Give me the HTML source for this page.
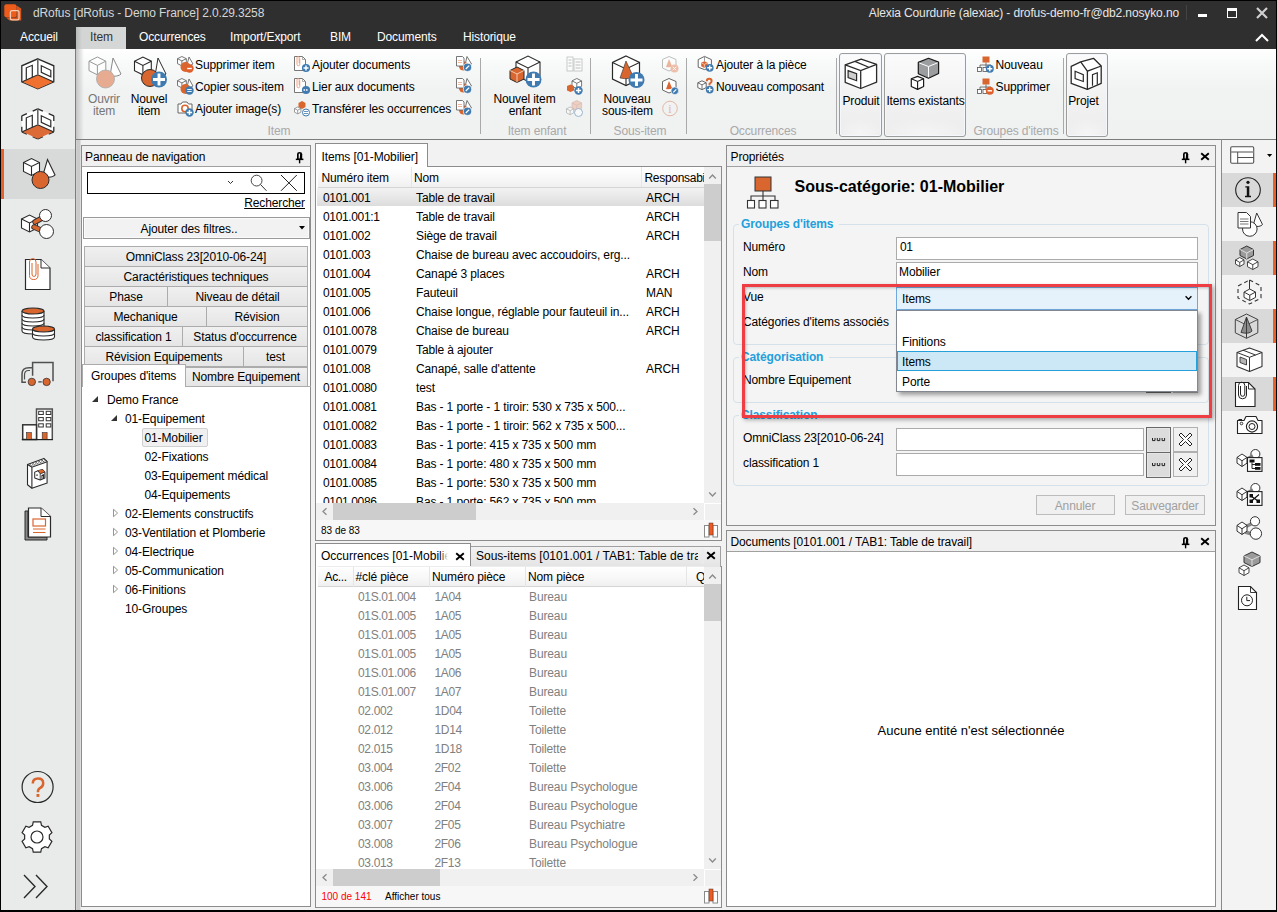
<!DOCTYPE html><html><head><meta charset="utf-8"><style>
html,body{margin:0;padding:0;}
body{width:1277px;height:912px;overflow:hidden;position:relative;background:#f2f2f2;font-family:"Liberation Sans",sans-serif;}
.t{position:absolute;white-space:nowrap;font-family:"Liberation Sans",sans-serif;}
.r{position:absolute;box-sizing:border-box;}
svg.r{overflow:visible}
</style></head><body>
<div class="r" style="left:0px;top:0px;width:1277px;height:49px;background:#2f2f2f"></div>
<div class="r" style="left:0px;top:0px;width:1277px;height:1px;background:#000"></div>
<svg class="r" style="left:0px;top:0px;" width="26" height="26" viewBox="0 0 26 26"><path d="M6 17.5H16.5V5.5L21.2 8.5V20.6H9.5Z" fill="#d8561c"/><rect x="4.3" y="4.3" width="12.2" height="13" rx="2" fill="#ee5c1c"/><rect x="10.4" y="10.6" width="8.6" height="9.2" rx="1.6" fill="none" stroke="#f6cdb4" stroke-width="1.3"/></svg>
<div class="t " style="left:33px;top:7.0px;font-size:12px;line-height:12px;color:#d6d6d6;font-weight:normal;letter-spacing:-0.12px;">dRofus [dRofus - Demo France] 2.0.29.3258</div>
<div class="t" style="right:98px;top:7.0px;font-size:12px;line-height:12px;color:#e6e6e6;font-weight:normal;letter-spacing:-0.12px;">Alexia Courdurie (alexiac) - drofus-demo-fr@db2.nosyko.no</div>
<div class="r" style="left:1186px;top:5px;width:1px;height:15px;background:#444"></div>
<div class="r" style="left:1198px;top:14px;width:9px;height:3px;background:#fff"></div>
<div class="r" style="left:1227px;top:8px;width:10px;height:10px;border:1px solid #fff;border-top-width:3px"></div>
<svg class="r" style="left:1256px;top:7px;" width="12" height="12" viewBox="0 0 12 12"><path d="M1 1L11 11M11 1L1 11" stroke="#cfcfcf" stroke-width="2.2"/></svg>
<div class="t " style="left:20px;top:31.0px;font-size:12px;line-height:12px;color:#fff;font-weight:normal;letter-spacing:-0.12px;">Accueil</div>
<div class="r" style="left:76px;top:27px;width:50px;height:22px;background:linear-gradient(90deg,#b9bbbb 0,#d3d5d5 6px,#d6d8d8 100%)"></div>
<div class="t " style="left:90px;top:31.0px;font-size:12px;line-height:12px;color:#333;font-weight:normal;letter-spacing:-0.12px;">Item</div>
<div class="t " style="left:139px;top:31.0px;font-size:12px;line-height:12px;color:#fff;font-weight:normal;letter-spacing:-0.12px;">Occurrences</div>
<div class="t " style="left:230px;top:31.0px;font-size:12px;line-height:12px;color:#fff;font-weight:normal;letter-spacing:-0.12px;">Import/Export</div>
<div class="t " style="left:330px;top:31.0px;font-size:12px;line-height:12px;color:#fff;font-weight:normal;letter-spacing:-0.12px;">BIM</div>
<div class="t " style="left:377px;top:31.0px;font-size:12px;line-height:12px;color:#fff;font-weight:normal;letter-spacing:-0.12px;">Documents</div>
<div class="t " style="left:463px;top:31.0px;font-size:12px;line-height:12px;color:#fff;font-weight:normal;letter-spacing:-0.12px;">Historique</div>
<svg class="r" style="left:1255px;top:33px;" width="14" height="9" viewBox="0 0 14 9"><path d="M1 8L7 2L13 8" stroke="#fff" stroke-width="2" fill="none"/></svg>
<!--BODY-->
<div class="r" style="left:1px;top:49px;width:74px;height:862px;background:#e9ebeb"></div>
<div class="r" style="left:75px;top:49px;width:1px;height:862px;background:#7c7c7c"></div>
<div class="r" style="left:1px;top:149px;width:74px;height:50px;background:#d8dada"></div>
<div class="r" style="left:1px;top:149px;width:3px;height:50px;background:#e8602c"></div>
<svg class="r" style="left:21px;top:57px;" width="35" height="33" viewBox="0 0 35 33"><g transform="translate(0.3,0.8)"><path d="M16.5 1L32.5 8V24L16.5 31L0.5 24V8Z" fill="#fff" stroke="#2a2a2a" stroke-width="1.3"/><path d="M16.5 17L32 24L16.5 31L1 24Z" fill="#f07030"/><path d="M1 24L16.5 17L32 24" fill="none" stroke="#2a2a2a" stroke-width="1.2"/><path d="M16.5 1V17" stroke="#666" stroke-width="1.6"/><path d="M5 22V10L11 7.5V19.5" fill="none" stroke="#2a2a2a" stroke-width="1.2"/><path d="M20 8L29.5 12.5V19L20 14.5Z" fill="none" stroke="#2a2a2a" stroke-width="1.2"/></g></svg>
<svg class="r" style="left:21px;top:107px;" width="35" height="33" viewBox="0 0 35 33"><g transform="translate(0.3,0.8)"><path d="M16.5 1L32.5 8V24L16.5 31L0.5 24V8Z" fill="#fff"/><path d="M16.5 1L21.62 3.24M27.38 5.76L32.5 8M32.5 8L32.50 13.12M32.50 18.88L32.5 24M32.5 24L27.38 26.24M21.62 28.76L16.5 31M16.5 31L11.38 28.76M5.62 26.24L0.5 24M0.5 24L0.50 18.88M0.50 13.12L0.5 8M0.5 8L5.62 5.76M11.38 3.24L16.5 1" fill="none" stroke="#2a2a2a" stroke-width="1.3"/><path d="M16.5 17L32 24L16.5 31L1 24Z" fill="#dc6a36"/><path d="M1 24L16.5 17L32 24" fill="none" stroke="#2a2a2a" stroke-width="1.2"/><path d="M16.5 1V17" stroke="#666" stroke-width="1.6"/><path d="M5 22V10L11 7.5V19.5" fill="none" stroke="#2a2a2a" stroke-width="1.2"/><path d="M20 8L29.5 12.5V19L20 14.5Z" fill="none" stroke="#2a2a2a" stroke-width="1.2"/></g></svg>
<svg class="r" style="left:22px;top:157px;" width="34" height="34" viewBox="0 0 34 34"><g transform="translate(1.5,1.5) scale(1.0)"><path d="M0 4L8 0L16 4V13L8 17L0 13Z" fill="#fff" stroke="#2a2a2a" stroke-width="1.1"/><path d="M0 4L8 8L16 4M8 8V17" fill="none" stroke="#2a2a2a" stroke-width="1.1"/></g><path d="M25.5 2.5L33 18Q30 21.5 20.5 19.5Z" fill="#fff" stroke="#2a2a2a" stroke-width="1.1"/><circle cx="18.5" cy="23" r="8.5" fill="#d9662f" stroke="#2a2a2a" stroke-width="1"/></svg>
<svg class="r" style="left:21px;top:207px;" width="34" height="30" viewBox="0 0 34 30"><g transform="translate(0.5,8) scale(1.0)"><path d="M0 4L8 0L16 4V13L8 17L0 13Z" fill="#fff" stroke="#2a2a2a" stroke-width="1.1"/><path d="M0 4L8 8L16 4M8 8V17" fill="none" stroke="#2a2a2a" stroke-width="1.1"/></g><path d="M14 15L23 10M13 20L22 24" stroke="#333" stroke-width="5.5" stroke-linecap="round"/><path d="M14 15L23 10M13 20L22 24" stroke="#d9662f" stroke-width="3.6" stroke-linecap="round"/><circle cx="24.5" cy="8.5" r="6" fill="#fff" stroke="#2a2a2a" stroke-width="1"/><circle cx="25.5" cy="24.5" r="7" fill="#fff" stroke="#2a2a2a" stroke-width="1"/></svg>
<svg class="r" style="left:24px;top:258px;" width="28" height="33" viewBox="0 0 28 33"><path d="M1.5 1.5H17L26 10V31.5H1.5Z" fill="#fff" stroke="#2a2a2a" stroke-width="1.2"/><path d="M17 1.5V10H26" fill="#fff" stroke="#2a2a2a" stroke-width="1"/><path d="M14 6V17.5Q14 21.5 9.75 21.5Q5.5 21.5 5.5 17.5V4Q5.5 0.5 8.75 0.5Q12 0.5 12 4V16Q12 18.5 9.75 18.5Q8 18.5 8 16V5" fill="none" stroke="#d9662f" stroke-width="1"/></svg>
<svg class="r" style="left:21px;top:307px;" width="34" height="34" viewBox="0 0 34 34"><path d="M1 20V24Q1 27 12 27Q23 27 23 24V20" fill="#fff" stroke="#2a2a2a" stroke-width="1.1"/><path d="M1 16V20Q1 23 12 23Q23 23 23 20V16" fill="#fff" stroke="#2a2a2a" stroke-width="1.1"/><path d="M1 12V16Q1 19 12 19Q23 19 23 16V12" fill="#fff" stroke="#2a2a2a" stroke-width="1.1"/><path d="M1 8V12Q1 15 12 15Q23 15 23 12V8" fill="#fff" stroke="#2a2a2a" stroke-width="1.1"/><path d="M1 4V8Q1 11 12 11Q23 11 23 8V4" fill="#fff" stroke="#2a2a2a" stroke-width="1.1"/><ellipse cx="12" cy="4" rx="11" ry="3" fill="#d9662f" stroke="#2a2a2a" stroke-width="1.1"/><path d="M11.5 26V30Q11.5 33 22.5 33Q33.5 33 33.5 30V26" fill="#fff" stroke="#2a2a2a" stroke-width="1.1"/><path d="M11.5 22V26Q11.5 29 22.5 29Q33.5 29 33.5 26V22" fill="#fff" stroke="#2a2a2a" stroke-width="1.1"/><ellipse cx="22.5" cy="22" rx="11" ry="3" fill="#d9662f" stroke="#2a2a2a" stroke-width="1.1"/></svg>
<svg class="r" style="left:0;top:0" width="76" height="912" viewBox="0 0 76 912"><path d="M32.6 375.7V362.4H53V381.2" fill="none" stroke="#505050" stroke-width="1.5"/><path d="M32.6 367.8H29Q22 367.8 22 374V382.2H26" fill="none" stroke="#505050" stroke-width="1.5"/><path d="M30 370.5H28.5Q24.5 370.5 24.5 375V379.5" fill="none" stroke="#505050" stroke-width="1.2"/><path d="M38.3 381.9H41.7" stroke="#333" stroke-width="1.2"/><circle cx="31.8" cy="381.9" r="3.7" fill="#d9662f" stroke="#333" stroke-width="0.8"/><circle cx="46.6" cy="381.9" r="3.7" fill="#d9662f" stroke="#333" stroke-width="0.8"/><path d="M36.5 439.5V409H52.3V439.5" fill="#fff" stroke="#505050" stroke-width="1.5"/><rect x="22.7" y="424.8" width="13.8" height="14.7" fill="#fff" stroke="#333" stroke-width="1.5"/><rect x="38.7" y="411.3" width="4.6" height="3.2" fill="#fff" stroke="#333" stroke-width="1"/><rect x="46.2" y="411.3" width="4.6" height="3.2" fill="#fff" stroke="#333" stroke-width="1"/><rect x="38.7" y="417.55" width="4.6" height="3.2" fill="#fff" stroke="#333" stroke-width="1"/><rect x="46.2" y="417.55" width="4.6" height="3.2" fill="#fff" stroke="#333" stroke-width="1"/><rect x="38.7" y="423.8" width="4.6" height="3.2" fill="#fff" stroke="#333" stroke-width="1"/><rect x="46.2" y="423.8" width="4.6" height="3.2" fill="#fff" stroke="#333" stroke-width="1"/><rect x="26.4" y="432.5" width="4.9" height="7" fill="#d9662f" stroke="#333" stroke-width="0.6"/><rect x="42.2" y="432.5" width="4.9" height="7" fill="#d9662f" stroke="#333" stroke-width="0.6"/><path d="M21.8 439.6H53" stroke="#222" stroke-width="1.2"/></svg>
<svg class="r" style="left:26px;top:457px;" width="23" height="33" viewBox="0 0 23 33"><path d="M1.5 7.5L17.9 1.4L21.2 4.7V26L5.9 31.2L1.5 27.7Z" fill="#fff" stroke="#2a2a2a" stroke-width="1.1" stroke-linejoin="round"/><path d="M1.5 7.5L5.9 10.2L21.2 4.7M5.9 10.2V31.2" fill="none" stroke="#2a2a2a" stroke-width="1.1"/><path d="M3 8.4L19 2.6M4.5 9.3L20.3 3.6" fill="none" stroke="#2a2a2a" stroke-width="0.8" stroke-dasharray="2 1.2"/><path d="M21.2 5V26" stroke="#777" stroke-width="1.2"/><g transform="translate(8.3,12) scale(0.34)"><path d="M1.2 26.4V9.3L10.7 4.9L23.5 1.3L31.2 9V26.4L17.4 32.4Z" fill="#fff" stroke="#2a2a2a" stroke-width="3" stroke-linejoin="round"/><path d="M10.7 4.9L23.5 1.3L31.2 9L17.4 14.1Z" fill="#d9662f"/><path d="M10.7 4.9L17.4 14.1L31.2 9M17.4 14.1V32.4" fill="none" stroke="#2a2a2a" stroke-width="2.5"/><rect x="6" y="16" width="4" height="4" fill="#2a2a2a"/><path d="M22.5 28.8V19L27.3 17V27.4" fill="none" stroke="#2a2a2a" stroke-width="3"/></g></svg>
<svg class="r" style="left:23px;top:507px;" width="29" height="34" viewBox="0 0 29 34"><path d="M2 4H5V30H24V33H2Z" fill="#888" stroke="#2a2a2a" stroke-width="1"/><path d="M5.5 1H18L27.5 9.5V30H5.5Z" fill="#fff" stroke="#2a2a2a" stroke-width="1.2"/><path d="M18 1V9.5H27.5" fill="#fff" stroke="#2a2a2a" stroke-width="1"/><rect x="10" y="12" width="12.5" height="7" fill="none" stroke="#d9662f" stroke-width="1.2"/><path d="M10 22H22.5M10 25.5H22.5" stroke="#d9662f" stroke-width="1"/></svg>
<svg class="r" style="left:21px;top:770px;" width="34" height="34" viewBox="0 0 34 34"><circle cx="16.6" cy="17" r="15.5" fill="none" stroke="#2a2a2a" stroke-width="1.2"/><path d="M11.8 13.6Q11.8 8.6 17 8.6Q22.2 8.6 22.2 13.3Q22.2 16.6 19 18.2Q16.9 19.3 16.9 22.2" fill="none" stroke="#d9662f" stroke-width="2.5"/><rect x="15.5" y="24" width="2.9" height="2.9" fill="#d9662f"/></svg>
<svg class="r" style="left:21px;top:821px;" width="33" height="33" viewBox="0 0 33 33"><polygon points="12.25,0.96 19.75,0.96 20.48,4.33 23.87,6.29 27.15,5.23 30.90,11.73 28.35,14.04 28.35,17.96 30.90,20.27 27.15,26.77 23.87,25.71 20.48,27.67 19.75,31.04 12.25,31.04 11.52,27.67 8.13,25.71 4.85,26.77 1.10,20.27 3.65,17.96 3.65,14.04 1.10,11.73 4.85,5.23 8.13,6.29 11.52,4.33" fill="#fff" stroke="#2a2a2a" stroke-width="1.2"/><circle cx="16" cy="16" r="6" fill="#fff" stroke="#2a2a2a" stroke-width="1.2"/></svg>
<svg class="r" style="left:23px;top:874px;" width="26" height="26" viewBox="0 0 26 26"><path d="M1 1L12 12.5L1 24M13 1L24 12.5L13 24" fill="none" stroke="#2a2a2a" stroke-width="1.4"/></svg>
<div class="r" style="left:76px;top:49px;width:1201px;height:90px;background:linear-gradient(180deg,#ffffff 0,#f8f9f9 15px,#f1f2f2 42px,#f0f1f1 90px)"></div>
<div class="r" style="left:76px;top:49px;width:8px;height:90px;background:linear-gradient(90deg,#c4c4c4 0,rgba(240,240,240,0) 8px)"></div>
<div class="r" style="left:76px;top:139px;width:1201px;height:1px;background:#7c7c7c"></div>
<div class="r" style="left:480px;top:58px;width:1px;height:76px;background:#a9a9a9"></div>
<div class="r" style="left:590px;top:58px;width:1px;height:76px;background:#a9a9a9"></div>
<div class="r" style="left:686px;top:58px;width:1px;height:76px;background:#a9a9a9"></div>
<div class="r" style="left:836px;top:58px;width:1px;height:76px;background:#a9a9a9"></div>
<div class="r" style="left:1063px;top:58px;width:1px;height:76px;background:#a9a9a9"></div>
<div class="t" style="left:179.0px;width:200px;text-align:center;top:125.0px;font-size:12px;line-height:12px;color:#a9a9a9;font-weight:normal;letter-spacing:-0.12px;">Item</div>
<div class="t" style="left:437.0px;width:200px;text-align:center;top:125.0px;font-size:12px;line-height:12px;color:#a9a9a9;font-weight:normal;letter-spacing:-0.12px;">Item enfant</div>
<div class="t" style="left:540.0px;width:200px;text-align:center;top:125.0px;font-size:12px;line-height:12px;color:#a9a9a9;font-weight:normal;letter-spacing:-0.12px;">Sous-item</div>
<div class="t" style="left:663.0px;width:200px;text-align:center;top:125.0px;font-size:12px;line-height:12px;color:#a9a9a9;font-weight:normal;letter-spacing:-0.12px;">Occurrences</div>
<div class="t" style="left:916.0px;width:200px;text-align:center;top:125.0px;font-size:12px;line-height:12px;color:#a9a9a9;font-weight:normal;letter-spacing:-0.12px;">Groupes d&#x27;items</div>
<svg class="r" style="left:88px;top:56px;" width="36" height="34" viewBox="0 0 36 34"><g opacity="0.75"><g transform="translate(1,1) scale(1.05)"><path d="M0 4L8 0L16 4V13L8 17L0 13Z" fill="#fff" stroke="#777" stroke-width="0.9523809523809523"/><path d="M0 4L8 8L16 4M8 8V17" fill="none" stroke="#777" stroke-width="0.9523809523809523"/></g></g><path d="M25 2L33 18Q30 21 22 20Z" fill="#fff" stroke="#888" stroke-width="1"/><circle cx="17.5" cy="23" r="9" fill="#e6ab90" stroke="#aaa" stroke-width="0.8"/></svg>
<div class="t" style="left:4.0px;width:200px;text-align:center;top:92.5px;font-size:12px;line-height:12px;color:#767676;font-weight:normal;letter-spacing:-0.12px;">Ouvrir</div>
<div class="t" style="left:4.0px;width:200px;text-align:center;top:105.0px;font-size:12px;line-height:12px;color:#767676;font-weight:normal;letter-spacing:-0.12px;">item</div>
<svg class="r" style="left:133px;top:56px;" width="36" height="34" viewBox="0 0 36 34"><g transform="translate(1.5,1) scale(1.05)"><path d="M0 4L8 0L16 4V13L8 17L0 13Z" fill="#fff" stroke="#2a2a2a" stroke-width="1.0476190476190477"/><path d="M0 4L8 8L16 4M8 8V17" fill="none" stroke="#2a2a2a" stroke-width="1.0476190476190477"/></g><path d="M25 2L33 18Q30 21 22 20Z" fill="#fff" stroke="#2a2a2a" stroke-width="1"/><circle cx="17" cy="22" r="8.5" fill="#d9662f" stroke="#2a2a2a" stroke-width="1"/><circle cx="26" cy="23.5" r="8" fill="#3f7bb0"/><path d="M20.0 23.5H32.0M26 17.5V29.5" stroke="#fff" stroke-width="2.88"/></svg>
<div class="t" style="left:49.0px;width:200px;text-align:center;top:92.5px;font-size:12px;line-height:12px;color:#000;font-weight:normal;letter-spacing:-0.12px;">Nouvel</div>
<div class="t" style="left:49.0px;width:200px;text-align:center;top:105.0px;font-size:12px;line-height:12px;color:#000;font-weight:normal;letter-spacing:-0.12px;">item</div>
<svg class="r" style="left:177px;top:56px;" width="17" height="17" viewBox="0 0 17 17"><g transform="translate(0.5,0.5) scale(0.55)"><path d="M0 4L8 0L16 4V13L8 17L0 13Z" fill="#fff" stroke="#555" stroke-width="1.4545454545454546"/><path d="M0 4L8 8L16 4M8 8V17" fill="none" stroke="#555" stroke-width="1.4545454545454546"/></g><path d="M12 1L16 8Q14 10 10 9Z" fill="#fff" stroke="#555" stroke-width="0.8"/><circle cx="8.5" cy="11" r="5" fill="#d9662f"/><circle cx="12.5" cy="12.5" r="4.2" fill="#e0602c"/><path d="M10.19 12.5H14.81" stroke="#fff" stroke-width="1.4"/></svg>
<svg class="r" style="left:177px;top:78px;" width="17" height="17" viewBox="0 0 17 17"><g transform="translate(0.5,0.5) scale(0.55)"><path d="M0 4L8 0L16 4V13L8 17L0 13Z" fill="#fff" stroke="#555" stroke-width="1.4545454545454546"/><path d="M0 4L8 8L16 4M8 8V17" fill="none" stroke="#555" stroke-width="1.4545454545454546"/></g><path d="M12 1L16 8Q14 10 10 9Z" fill="#fff" stroke="#555" stroke-width="0.8"/><circle cx="8.5" cy="11" r="5" fill="#d9662f"/><circle cx="12.5" cy="12.5" r="4.2" fill="#3f7bb0"/><path d="M10.3 11.5H14.7M10.3 13.5H14.7" stroke="#fff" stroke-width="0.9"/></svg>
<svg class="r" style="left:177px;top:100px;" width="17" height="17" viewBox="0 0 17 17"><path d="M1 4H4L5.5 2H10L11.5 4H15V13H1Z" fill="#fff" stroke="#666" stroke-width="1"/><circle cx="8" cy="8.5" r="3.2" fill="none" stroke="#d9662f" stroke-width="1.6"/><circle cx="12.5" cy="12.5" r="4.2" fill="#3f7bb0"/><path d="M9.896 12.5H15.104M12.5 9.896V15.104" stroke="#fff" stroke-width="1.512"/></svg>
<div class="t " style="left:195px;top:59.2px;font-size:12px;line-height:12px;color:#000;font-weight:normal;letter-spacing:-0.12px;">Supprimer item</div>
<div class="t " style="left:195px;top:81.2px;font-size:12px;line-height:12px;color:#000;font-weight:normal;letter-spacing:-0.12px;">Copier sous-item</div>
<div class="t " style="left:195px;top:102.7px;font-size:12px;line-height:12px;color:#000;font-weight:normal;letter-spacing:-0.12px;">Ajouter image(s)</div>
<svg class="r" style="left:294px;top:56px;" width="17" height="17" viewBox="0 0 17 17"><path d="M0.5 0.5H8.5L11.5 3.5V14.5H0.5Z" fill="#fff" stroke="#777" stroke-width="1"/><path d="M8.5 0.5V3.5H11.5" fill="none" stroke="#999" stroke-width="0.8"/><path d="M5.8 2.5V8.3Q5.8 9.8 4.4 9.8Q3 9.8 3 8.3V1.8Q3 0.6 4.2 0.6Q5.2 0.6 5.2 1.8V7" fill="none" stroke="#eb9a78" stroke-width="0.9"/><circle cx="12" cy="12" r="4.1" fill="#3f7bb0"/><path d="M9.458 12H14.542M12 9.458V14.542" stroke="#fff" stroke-width="1.4759999999999998"/></svg>
<svg class="r" style="left:294px;top:78px;" width="17" height="17" viewBox="0 0 17 17"><path d="M0.5 0.5H8.5L11.5 3.5V14.5H0.5Z" fill="#fff" stroke="#777" stroke-width="1"/><path d="M8.5 0.5V3.5H11.5" fill="none" stroke="#999" stroke-width="0.8"/><path d="M5.8 2.5V8.3Q5.8 9.8 4.4 9.8Q3 9.8 3 8.3V1.8Q3 0.6 4.2 0.6Q5.2 0.6 5.2 1.8V7" fill="none" stroke="#eb9a78" stroke-width="0.9"/><circle cx="12" cy="12" r="4.1" fill="#3f7bb0"/><path d="M9.5 12H14.5" stroke="#fff" stroke-width="1.5" stroke-dasharray="1.6 0.9"/></svg>
<svg class="r" style="left:294px;top:100px;" width="17" height="17" viewBox="0 0 17 17"><path d="M4.5 3L8 1L11.5 3V7L8 9L4.5 7Z" fill="#d9662f"/><g transform="translate(0.5,7) scale(0.4)"><path d="M0 4L8 0L16 4V13L8 17L0 13Z" fill="#fff" stroke="#777" stroke-width="1.7499999999999998"/><path d="M0 4L8 8L16 4M8 8V17" fill="none" stroke="#777" stroke-width="1.7499999999999998"/></g><rect x="8.5" y="9" width="7" height="7" rx="3.5" fill="#fff" stroke="#3f7bb0" stroke-width="1"/><path d="M10 11.5H14M14 13.5H10" stroke="#3f7bb0" stroke-width="0.8"/></svg>
<div class="t " style="left:312px;top:59.2px;font-size:12px;line-height:12px;color:#000;font-weight:normal;letter-spacing:-0.12px;">Ajouter documents</div>
<div class="t " style="left:312px;top:81.2px;font-size:12px;line-height:12px;color:#000;font-weight:normal;letter-spacing:-0.12px;">Lier aux documents</div>
<div class="t " style="left:312px;top:102.7px;font-size:12px;line-height:12px;color:#000;font-weight:normal;letter-spacing:-0.12px;">Transférer les occurrences</div>
<svg class="r" style="left:456px;top:56px;" width="17" height="17" viewBox="0 0 17 17"><path d="M11 0.5L15.5 8Q14 9.5 9 9Z" fill="#fff" stroke="#666" stroke-width="0.9"/><circle cx="7.5" cy="10" r="4.6" fill="#d9662f"/><path d="M0.5 0.5H6.5L8 2V10H0.5Z" fill="#fff" stroke="#666" stroke-width="0.9"/><path d="M2 4.5H6M2 6.5H6" stroke="#f0b8a0" stroke-width="1"/><circle cx="11.5" cy="11.3" r="4.1" fill="#3f7bb0" stroke="#fff" stroke-width="0.7"/><path d="M9.8 13L13.2 9.6" stroke="#fff" stroke-width="1.3"/></svg>
<svg class="r" style="left:456px;top:78px;" width="17" height="17" viewBox="0 0 17 17"><path d="M11 0.5L15.5 8Q14 9.5 9 9Z" fill="#fff" stroke="#666" stroke-width="0.9"/><circle cx="7.5" cy="10" r="4.6" fill="#d9662f"/><path d="M0.5 0.5H6.5L8 2V10H0.5Z" fill="#fff" stroke="#666" stroke-width="0.9"/><path d="M2 4.5H6M2 6.5H6" stroke="#f0b8a0" stroke-width="1"/><circle cx="11.5" cy="11.3" r="4.1" fill="#3f7bb0" stroke="#fff" stroke-width="0.7"/><path d="M9.8 13L13.2 9.6" stroke="#fff" stroke-width="1.3"/></svg>
<svg class="r" style="left:456px;top:100px;" width="17" height="17" viewBox="0 0 17 17"><path d="M11 0.5L15.5 8Q14 9.5 9 9Z" fill="#fff" stroke="#666" stroke-width="0.9"/><circle cx="7.5" cy="10" r="4.6" fill="#d9662f"/><path d="M0.5 0.5H6.5L8 2V10H0.5Z" fill="#fff" stroke="#666" stroke-width="0.9"/><path d="M2 4.5H6M2 6.5H6" stroke="#f0b8a0" stroke-width="1"/><circle cx="11.5" cy="11.3" r="4.1" fill="#3f7bb0" stroke="#fff" stroke-width="0.7"/><path d="M9.8 13L13.2 9.6" stroke="#fff" stroke-width="1.3"/></svg>
<svg class="r" style="left:509px;top:55px;" width="34" height="34" viewBox="0 0 34 34"><g transform="translate(7,1) scale(1.5)"><path d="M0 4L8 0L16 4V13L8 17L0 13Z" fill="#fff" stroke="#2a2a2a" stroke-width="0.7333333333333334"/><path d="M0 4L8 8L16 4M8 8V17" fill="none" stroke="#2a2a2a" stroke-width="0.7333333333333334"/></g><path d="M1 15.5L8 12L15 15.5V24L8 27.5L1 24Z" fill="#d9662f" stroke="#2a2a2a" stroke-width="1"/><path d="M1 15.5L8 19L15 15.5M8 19V27.5" fill="none" stroke="#f5d5c0" stroke-width="0.9"/><circle cx="24.5" cy="24.5" r="8" fill="#3f7bb0"/><path d="M18.5 24.5H30.5M24.5 18.5V30.5" stroke="#fff" stroke-width="2.88"/></svg>
<div class="t" style="left:424.5px;width:200px;text-align:center;top:92.5px;font-size:12px;line-height:12px;color:#000;font-weight:normal;letter-spacing:-0.12px;">Nouvel item</div>
<div class="t" style="left:425.0px;width:200px;text-align:center;top:105.0px;font-size:12px;line-height:12px;color:#000;font-weight:normal;letter-spacing:-0.12px;">enfant</div>
<svg class="r" style="left:566px;top:56px;" width="17" height="17" viewBox="0 0 17 17"><g opacity="0.45"><rect x="1" y="1" width="6" height="14" fill="#fff" stroke="#777" stroke-width="0.8"/><rect x="8" y="3" width="8" height="12" fill="#fff" stroke="#777" stroke-width="0.8"/><path d="M2.5 4H5.5M2.5 7H5.5M2.5 10H5.5M9.5 6H14.5M9.5 9H14.5M9.5 12H14.5" stroke="#555" stroke-width="0.8"/></g></svg>
<svg class="r" style="left:566px;top:78px;" width="17" height="17" viewBox="0 0 17 17"><g transform="translate(6,0.5) scale(0.6)"><path d="M0 4L8 0L16 4V13L8 17L0 13Z" fill="#fff" stroke="#555" stroke-width="1.3333333333333335"/><path d="M0 4L8 8L16 4M8 8V17" fill="none" stroke="#555" stroke-width="1.3333333333333335"/></g><path d="M1 8L4.5 6.5L8 8V12.5L4.5 14L1 12.5Z" fill="#d9662f"/><circle cx="12.5" cy="12.5" r="4.2" fill="#3f7bb0"/><path d="M9.896 12.5H15.104M12.5 9.896V15.104" stroke="#fff" stroke-width="1.512"/></svg>
<svg class="r" style="left:566px;top:100px;" width="17" height="17" viewBox="0 0 17 17"><g opacity="0.5"><g transform="translate(6,0.5) scale(0.6)"><path d="M0 4L8 0L16 4V13L8 17L0 13Z" fill="#e8b090" stroke="#c88" stroke-width="1.3333333333333335"/><path d="M0 4L8 8L16 4M8 8V17" fill="none" stroke="#c88" stroke-width="1.3333333333333335"/></g><g transform="translate(0.5,7) scale(0.45)"><path d="M0 4L8 0L16 4V13L8 17L0 13Z" fill="#fff" stroke="#777" stroke-width="1.777777777777778"/><path d="M0 4L8 8L16 4M8 8V17" fill="none" stroke="#777" stroke-width="1.777777777777778"/></g><circle cx="12.5" cy="12.5" r="4" fill="#fff" stroke="#3f7bb0" stroke-width="1"/></g></svg>
<svg class="r" style="left:612px;top:55px;" width="34" height="34" viewBox="0 0 34 34"><path d="M14 1L27.5 7.5V24L14 30.5L0.5 24V7.5Z" fill="#fff" stroke="#2a2a2a" stroke-width="1.2"/><path d="M0.5 7.5L14 14L27.5 7.5M14 14V30.5" fill="none" stroke="#2a2a2a" stroke-width="1.1"/><path d="M14 6L21 21Q18 25 8 23Z" fill="#d9662f" stroke="#333" stroke-width="0.6"/><circle cx="24.5" cy="25" r="8" fill="#3f7bb0"/><path d="M18.5 25H30.5M24.5 19.0V31.0" stroke="#fff" stroke-width="2.88"/></svg>
<div class="t" style="left:527.0px;width:200px;text-align:center;top:92.5px;font-size:12px;line-height:12px;color:#000;font-weight:normal;letter-spacing:-0.12px;">Nouveau</div>
<div class="t" style="left:527.5px;width:200px;text-align:center;top:105.0px;font-size:12px;line-height:12px;color:#000;font-weight:normal;letter-spacing:-0.12px;">sous-item</div>
<svg class="r" style="left:662px;top:56px;" width="17" height="17" viewBox="0 0 17 17"><g opacity="0.45"><path d="M7 0.5L14 3.5V12L7 15L0.5 12V3.5Z" fill="#fff" stroke="#666" stroke-width="0.9"/><path d="M7 3L10 10Q8.5 12 4 11Z" fill="#d9662f"/><circle cx="12.5" cy="12.5" r="4" fill="#e57a50"/><path d="M10.8 10.8L14.2 14.2M14.2 10.8L10.8 14.2" stroke="#fff" stroke-width="1"/></g></svg>
<svg class="r" style="left:662px;top:78px;" width="17" height="17" viewBox="0 0 17 17"><path d="M7 0.5L14 3.5V12L7 15L0.5 12V3.5Z" fill="#fff" stroke="#555" stroke-width="0.9"/><path d="M7 3L10 10Q8.5 12 4 11Z" fill="#d9662f"/><circle cx="12.8" cy="12.8" r="3.8" fill="#3f7bb0" stroke="#fff" stroke-width="0.6"/><path d="M11.3 14.3L14.3 11.3" stroke="#fff" stroke-width="1.2"/></svg>
<svg class="r" style="left:662px;top:100px;" width="17" height="17" viewBox="0 0 17 17"><circle cx="8" cy="8.5" r="7.3" fill="none" stroke="#e3b8a3" stroke-width="1"/><text x="8" y="13" text-anchor="middle" font-family="Liberation Serif" font-size="12" fill="#e3b8a3">i</text></svg>
<svg class="r" style="left:697px;top:56px;" width="17" height="17" viewBox="0 0 17 17"><path d="M7.5 0.4L14.4 3.6V11.2L7.5 13.6L1.2 11.2V3.6Z" fill="#fff" stroke="#555" stroke-width="0.9"/><path d="M7.5 1V5.5" stroke="#999" stroke-width="1"/><path d="M7.4 5.2L10.6 6.8V10.3L7.4 11.9L4.2 10.3V6.8Z" fill="#d9662f"/><path d="M4.4 6.9L7.4 8.4L10.4 6.9M7.4 8.4V11.7" fill="none" stroke="#f5d0bb" stroke-width="0.8"/><circle cx="12.7" cy="11.8" r="3.9" fill="#3f7bb0"/><path d="M10.282 11.8H15.117999999999999M12.7 9.382000000000001V14.218" stroke="#fff" stroke-width="1.404"/></svg>
<svg class="r" style="left:697px;top:78px;" width="17" height="17" viewBox="0 0 17 17"><path d="M5 2.8L9.2 4.8V9.6L5 11.6L0.8 9.6V4.8Z" fill="#fff" stroke="#555" stroke-width="0.9"/><path d="M0.8 4.8L5 6.8L9.2 4.8M5 6.8V11.6" fill="none" stroke="#555" stroke-width="0.8"/><path d="M9.8 3.2Q9.8 0.8 12.2 0.8Q14.6 0.8 14.6 3Q14.6 4.8 12.6 5.6V7.2" fill="none" stroke="#d9662f" stroke-width="2"/><circle cx="12.7" cy="11.6" r="3.9" fill="#3f7bb0"/><path d="M10.282 11.6H15.117999999999999M12.7 9.181999999999999V14.018" stroke="#fff" stroke-width="1.404"/></svg>
<div class="t " style="left:716px;top:59.2px;font-size:12px;line-height:12px;color:#000;font-weight:normal;letter-spacing:-0.12px;">Ajouter à la pièce</div>
<div class="t " style="left:716px;top:81.2px;font-size:12px;line-height:12px;color:#000;font-weight:normal;letter-spacing:-0.12px;">Nouveau composant</div>
<div class="r" style="left:839px;top:53px;width:43px;height:84px;border:1px solid #9c9c9c;border-radius:3px;box-shadow:inset 0 0 0 1px #f4f8fc;background:radial-gradient(ellipse 60% 22% at 50% 100%,#f6f6f6 0,rgba(246,246,246,0) 100%),linear-gradient(180deg,#fbfbfb 0,#f3f3f3 45%,#ececec 100%)"></div>
<div class="r" style="left:884px;top:53px;width:82px;height:84px;border:1px solid #9c9c9c;border-radius:3px;box-shadow:inset 0 0 0 1px #f4f8fc;background:radial-gradient(ellipse 60% 22% at 50% 100%,#f6f6f6 0,rgba(246,246,246,0) 100%),linear-gradient(180deg,#fbfbfb 0,#f3f3f3 45%,#ececec 100%)"></div>
<div class="r" style="left:1066px;top:53px;width:42px;height:84px;border:1px solid #9c9c9c;border-radius:3px;box-shadow:inset 0 0 0 1px #f4f8fc;background:radial-gradient(ellipse 60% 22% at 50% 100%,#f6f6f6 0,rgba(246,246,246,0) 100%),linear-gradient(180deg,#fbfbfb 0,#f3f3f3 45%,#ececec 100%)"></div>
<svg class="r" style="left:844px;top:58px;" width="34" height="32" viewBox="0 0 34 32"><path d="M17.2 1.2L32.6 6.3V24.2L16.7 30.5L1.2 24.4V6.8Z" fill="#fff" stroke="#2a2a2a" stroke-width="1.3" stroke-linejoin="round"/><path d="M1.2 6.8L16.7 12.6L32.6 6.3M16.7 12.6V30.5M10.9 3.4L25.4 9.5" fill="none" stroke="#2a2a2a" stroke-width="1.3"/><path d="M4.1 12.6L12.6 15.7V22.7L4.1 19.6Z" fill="#cfcfcf" stroke="#2a2a2a" stroke-width="1.2"/></svg>
<div class="t" style="left:761.0px;width:200px;text-align:center;top:95.2px;font-size:12px;line-height:12px;color:#000;font-weight:normal;letter-spacing:-0.12px;">Produit</div>
<svg class="r" style="left:900px;top:52px;" width="50" height="44" viewBox="0 0 50 44"><path d="M28.5 6.3L38.6 10.1V21.5L28.5 26.3L18.3 21.7V10.4Z" fill="#9b9d9e" stroke="#1a1a1a" stroke-width="1.2" stroke-linejoin="round"/><path d="M19.3 11L28.5 14.5L37.6 10.8M28.5 14.5V25.3" fill="none" stroke="#fff" stroke-width="1"/><path d="M17.6 24.4L23.6 26.8V34.5L17.6 37.4L11.3 34.5V26.8Z" fill="#fff" stroke="#1a1a1a" stroke-width="1.2" stroke-linejoin="round"/><path d="M11.3 26.8L17.6 29.4L23.6 26.8M17.6 29.4V37.4" fill="none" stroke="#1a1a1a" stroke-width="1.1"/></svg>
<div class="t" style="left:825.5px;width:200px;text-align:center;top:95.2px;font-size:12px;line-height:12px;color:#000;font-weight:normal;letter-spacing:-0.12px;">Items existants</div>
<svg class="r" style="left:977px;top:56px;" width="17" height="17" viewBox="0 0 17 17"><rect x="5.5" y="0.5" width="7" height="6" fill="#d9662f"/><path d="M9 6.5V9M3 12V9H14V12M9 9V12" fill="none" stroke="#555" stroke-width="0.8"/><rect x="0.5" y="11.5" width="4" height="4" fill="#fff" stroke="#555" stroke-width="0.8"/><rect x="6" y="11.5" width="4" height="4" fill="#fff" stroke="#555" stroke-width="0.8"/><circle cx="12.8" cy="12.8" r="4" fill="#3f7bb0"/><path d="M10.32 12.8H15.280000000000001M12.8 10.32V15.280000000000001" stroke="#fff" stroke-width="1.44"/></svg>
<svg class="r" style="left:977px;top:78px;" width="17" height="17" viewBox="0 0 17 17"><rect x="5.5" y="0.5" width="7" height="6" fill="#d9662f"/><path d="M9 6.5V9M3 12V9H14V12M9 9V12" fill="none" stroke="#555" stroke-width="0.8"/><rect x="0.5" y="11.5" width="4" height="4" fill="#fff" stroke="#555" stroke-width="0.8"/><rect x="6" y="11.5" width="4" height="4" fill="#fff" stroke="#555" stroke-width="0.8"/><circle cx="12.8" cy="12.8" r="4" fill="#e0602c"/><path d="M10.600000000000001 12.8H15.0" stroke="#fff" stroke-width="1.4"/></svg>
<div class="t " style="left:995.5px;top:59.2px;font-size:12px;line-height:12px;color:#000;font-weight:normal;letter-spacing:-0.12px;">Nouveau</div>
<div class="t " style="left:995.5px;top:81.2px;font-size:12px;line-height:12px;color:#000;font-weight:normal;letter-spacing:-0.12px;">Supprimer</div>
<svg class="r" style="left:1070px;top:57px;" width="34" height="34" viewBox="0 0 34 34"><path d="M1.2 26.4V9.3L10.7 4.9L23.5 1.3L31.2 9V26.4L17.4 32.4Z" fill="#fff" stroke="#2a2a2a" stroke-width="1.3" stroke-linejoin="round"/><path d="M10.7 4.9L17.4 14.1L31.2 9M17.4 14.1V32.4" fill="none" stroke="#2a2a2a" stroke-width="1.3"/><path d="M5.1 14.3L13.3 17.7V24.5L5.1 21.6Z" fill="none" stroke="#2a2a2a" stroke-width="1.2"/><path d="M22.5 28.8V17.7L27.3 15.8V27.4" fill="none" stroke="#2a2a2a" stroke-width="1.2"/></svg>
<div class="t" style="left:983.5px;width:200px;text-align:center;top:95.2px;font-size:12px;line-height:12px;color:#000;font-weight:normal;letter-spacing:-0.12px;">Projet</div>
<div class="r" style="left:76px;top:140px;width:5px;height:771px;background:linear-gradient(90deg,#d4d4d4 0,#c9c9c9 1.5px,#cbcbcb 3.5px,#e6e6e6 5px)"></div>
<div class="r" style="left:81px;top:145px;width:230px;height:762px;background:#fff;border:1px solid #8c8c8c"></div>
<div class="r" style="left:82px;top:146px;width:228px;height:21px;background:#f0f0f0;border-bottom:1px solid #a0a0a0"></div>
<div class="t " style="left:85px;top:150.5px;font-size:12px;line-height:12px;color:#000;font-weight:normal;letter-spacing:-0.12px;">Panneau de navigation</div>
<svg class="r" style="left:295px;top:151px;" width="10" height="13" viewBox="0 0 10 13"><path d="M2 8.2V3.2Q2 1 4.6 1Q7.2 1 7.2 3.2V8.2Z" fill="#000"/><path d="M3.7 7.8V3.2Q3.7 2.4 4.7 2.4Q5.4 2.4 5.1 3.2L4.7 7.8Z" fill="#f0f0f0"/><rect x="0.8" y="7.6" width="7.6" height="1.5" fill="#000"/><rect x="3.9" y="8.5" width="1.4" height="3.8" fill="#000"/></svg>
<div class="r" style="left:87px;top:172px;width:218px;height:22px;border:1px solid #000;background:#fff"></div>
<svg class="r" style="left:226px;top:180px;" width="9" height="6" viewBox="0 0 9 6"><path d="M2 1L4.5 3.5L7 1" fill="none" stroke="#333" stroke-width="1"/></svg>
<svg class="r" style="left:250px;top:173px;" width="18" height="19" viewBox="0 0 18 19"><circle cx="6.6" cy="7.6" r="5.4" fill="none" stroke="#444" stroke-width="1"/><path d="M10.5 11.5L16.5 17.8" stroke="#333" stroke-width="1"/></svg>
<svg class="r" style="left:280px;top:174px;" width="18" height="18" viewBox="0 0 18 18"><path d="M1 1L16.8 16.8M16.8 1L1 16.8" stroke="#222" stroke-width="1"/></svg>
<div class="t" style="right:972px;top:197.0px;font-size:12px;line-height:12px;color:#000;font-weight:normal;letter-spacing:-0.12px;text-decoration:underline;">Rechercher</div>
<div class="r" style="left:83px;top:217px;width:227px;height:22px;border:1px solid #9a9a9a;background:#f2f2f2;box-shadow:inset 0 0 0 1px #fbfbfb"></div>
<div class="t" style="left:89.0px;width:200px;text-align:center;top:222.5px;font-size:12px;line-height:12px;color:#000;font-weight:normal;letter-spacing:-0.12px;">Ajouter des filtres..</div>
<svg class="r" style="left:299px;top:226px;" width="6" height="4" viewBox="0 0 6 4"><path d="M0 0H6L3 3.5Z" fill="#000"/></svg>
<div class="r" style="left:84px;top:246px;width:224px;height:21px;border:1px solid #acacac;background:linear-gradient(180deg,#f0f0f0 0,#e5e5e5 100%)"></div>
<div class="t" style="left:96.0px;width:200px;text-align:center;top:250.5px;font-size:12px;line-height:12px;color:#000;font-weight:normal;letter-spacing:-0.12px;">OmniClass 23[2010-06-24]</div>
<div class="r" style="left:84px;top:266px;width:224px;height:21px;border:1px solid #acacac;background:linear-gradient(180deg,#f0f0f0 0,#e5e5e5 100%)"></div>
<div class="t" style="left:96.0px;width:200px;text-align:center;top:270.5px;font-size:12px;line-height:12px;color:#000;font-weight:normal;letter-spacing:-0.12px;">Caractéristiques techniques</div>
<div class="r" style="left:84px;top:286px;width:84px;height:21px;border:1px solid #acacac;background:linear-gradient(180deg,#f0f0f0 0,#e5e5e5 100%)"></div>
<div class="t" style="left:26.0px;width:200px;text-align:center;top:290.5px;font-size:12px;line-height:12px;color:#000;font-weight:normal;letter-spacing:-0.12px;">Phase</div>
<div class="r" style="left:167px;top:286px;width:141px;height:21px;border:1px solid #acacac;background:linear-gradient(180deg,#f0f0f0 0,#e5e5e5 100%)"></div>
<div class="t" style="left:137.5px;width:200px;text-align:center;top:290.5px;font-size:12px;line-height:12px;color:#000;font-weight:normal;letter-spacing:-0.12px;">Niveau de détail</div>
<div class="r" style="left:84px;top:306px;width:123px;height:21px;border:1px solid #acacac;background:linear-gradient(180deg,#f0f0f0 0,#e5e5e5 100%)"></div>
<div class="t" style="left:45.5px;width:200px;text-align:center;top:310.5px;font-size:12px;line-height:12px;color:#000;font-weight:normal;letter-spacing:-0.12px;">Mechanique</div>
<div class="r" style="left:206px;top:306px;width:102px;height:21px;border:1px solid #acacac;background:linear-gradient(180deg,#f0f0f0 0,#e5e5e5 100%)"></div>
<div class="t" style="left:157.0px;width:200px;text-align:center;top:310.5px;font-size:12px;line-height:12px;color:#000;font-weight:normal;letter-spacing:-0.12px;">Révision</div>
<div class="r" style="left:84px;top:326px;width:99px;height:21px;border:1px solid #acacac;background:linear-gradient(180deg,#f0f0f0 0,#e5e5e5 100%)"></div>
<div class="t" style="left:33.5px;width:200px;text-align:center;top:330.5px;font-size:12px;line-height:12px;color:#000;font-weight:normal;letter-spacing:-0.12px;">classification 1</div>
<div class="r" style="left:182px;top:326px;width:126px;height:21px;border:1px solid #acacac;background:linear-gradient(180deg,#f0f0f0 0,#e5e5e5 100%)"></div>
<div class="t" style="left:145.0px;width:200px;text-align:center;top:330.5px;font-size:12px;line-height:12px;color:#000;font-weight:normal;letter-spacing:-0.12px;">Status d&#x27;occurrence</div>
<div class="r" style="left:84px;top:346px;width:160px;height:21px;border:1px solid #acacac;background:linear-gradient(180deg,#f0f0f0 0,#e5e5e5 100%)"></div>
<div class="t" style="left:64.0px;width:200px;text-align:center;top:350.5px;font-size:12px;line-height:12px;color:#000;font-weight:normal;letter-spacing:-0.12px;">Révision Equipements</div>
<div class="r" style="left:243px;top:346px;width:65px;height:21px;border:1px solid #acacac;background:linear-gradient(180deg,#f0f0f0 0,#e5e5e5 100%)"></div>
<div class="t" style="left:175.5px;width:200px;text-align:center;top:350.5px;font-size:12px;line-height:12px;color:#000;font-weight:normal;letter-spacing:-0.12px;">test</div>
<div class="r" style="left:185px;top:367px;width:123px;height:20px;border:1px solid #acacac;background:linear-gradient(180deg,#f0f0f0 0,#e5e5e5 100%)"></div>
<div class="t" style="left:146.0px;width:200px;text-align:center;top:371.0px;font-size:12px;line-height:12px;color:#000;font-weight:normal;letter-spacing:-0.12px;">Nombre Equipement</div>
<div class="r" style="left:82px;top:364px;width:104px;height:23px;background:#fff;border:1px solid #acacac;border-bottom:none"></div>
<div class="t " style="left:91px;top:370.0px;font-size:12px;line-height:12px;color:#000;font-weight:normal;letter-spacing:-0.12px;">Groupes d&#x27;items</div>
<div class="r" style="left:82px;top:386px;width:229px;height:1px;background:#acacac"></div>
<div class="r" style="left:83px;top:386px;width:102px;height:1px;background:#fff"></div>
<svg class="r" style="left:91px;top:395px;" width="8" height="8" viewBox="0 0 8 8"><path d="M7 1V7H1Z" fill="#333"/></svg>
<div class="t " style="left:107px;top:393.5px;font-size:12px;line-height:12px;color:#000;font-weight:normal;letter-spacing:-0.12px;">Demo France</div>
<svg class="r" style="left:110px;top:414px;" width="8" height="8" viewBox="0 0 8 8"><path d="M7 1V7H1Z" fill="#333"/></svg>
<div class="t " style="left:125px;top:412.5px;font-size:12px;line-height:12px;color:#000;font-weight:normal;letter-spacing:-0.12px;">01-Equipement</div>
<div class="r" style="left:142px;top:428px;width:66px;height:19px;background:#f0f0f0;border:1px solid #d0d0d0;border-radius:2px"></div>
<div class="t " style="left:144.5px;top:431.5px;font-size:12px;line-height:12px;color:#000;font-weight:normal;letter-spacing:-0.12px;">01-Mobilier</div>
<div class="t " style="left:144.5px;top:450.5px;font-size:12px;line-height:12px;color:#000;font-weight:normal;letter-spacing:-0.12px;">02-Fixations</div>
<div class="t " style="left:144.5px;top:469.5px;font-size:12px;line-height:12px;color:#000;font-weight:normal;letter-spacing:-0.12px;">03-Equipement médical</div>
<div class="t " style="left:144.5px;top:488.5px;font-size:12px;line-height:12px;color:#000;font-weight:normal;letter-spacing:-0.12px;">04-Equipements</div>
<svg class="r" style="left:112px;top:508.0px;" width="8" height="10" viewBox="0 0 8 10"><path d="M1.5 1.3L5.6 5L1.5 8.7Z" fill="#fff" stroke="#8a8a8a" stroke-width="0.9"/></svg>
<div class="t " style="left:125px;top:507.5px;font-size:12px;line-height:12px;color:#000;font-weight:normal;letter-spacing:-0.12px;">02-Elements constructifs</div>
<svg class="r" style="left:112px;top:527.0px;" width="8" height="10" viewBox="0 0 8 10"><path d="M1.5 1.3L5.6 5L1.5 8.7Z" fill="#fff" stroke="#8a8a8a" stroke-width="0.9"/></svg>
<div class="t " style="left:125px;top:526.5px;font-size:12px;line-height:12px;color:#000;font-weight:normal;letter-spacing:-0.12px;">03-Ventilation et Plomberie</div>
<svg class="r" style="left:112px;top:546.0px;" width="8" height="10" viewBox="0 0 8 10"><path d="M1.5 1.3L5.6 5L1.5 8.7Z" fill="#fff" stroke="#8a8a8a" stroke-width="0.9"/></svg>
<div class="t " style="left:125px;top:545.5px;font-size:12px;line-height:12px;color:#000;font-weight:normal;letter-spacing:-0.12px;">04-Electrique</div>
<svg class="r" style="left:112px;top:565.0px;" width="8" height="10" viewBox="0 0 8 10"><path d="M1.5 1.3L5.6 5L1.5 8.7Z" fill="#fff" stroke="#8a8a8a" stroke-width="0.9"/></svg>
<div class="t " style="left:125px;top:564.5px;font-size:12px;line-height:12px;color:#000;font-weight:normal;letter-spacing:-0.12px;">05-Communication</div>
<svg class="r" style="left:112px;top:584.0px;" width="8" height="10" viewBox="0 0 8 10"><path d="M1.5 1.3L5.6 5L1.5 8.7Z" fill="#fff" stroke="#8a8a8a" stroke-width="0.9"/></svg>
<div class="t " style="left:125px;top:583.5px;font-size:12px;line-height:12px;color:#000;font-weight:normal;letter-spacing:-0.12px;">06-Finitions</div>
<div class="t " style="left:125px;top:602.5px;font-size:12px;line-height:12px;color:#000;font-weight:normal;letter-spacing:-0.12px;">10-Groupes</div>
<div class="r" style="left:315px;top:166px;width:407px;height:375px;background:#fff;border:1px solid #8c8c8c"></div>
<div class="r" style="left:315px;top:143px;width:113px;height:24px;background:#fff;border:1px solid #8c8c8c;border-bottom:none"></div>
<div class="t " style="left:321.5px;top:151.0px;font-size:12px;line-height:12px;color:#000;font-weight:normal;letter-spacing:-0.12px;">Items [01-Mobilier]</div>
<div class="r" style="left:318px;top:167px;width:386px;height:21px;background:linear-gradient(180deg,#ffffff 0,#f7f7f7 60%,#f0f0f0 100%);border-bottom:1px solid #d5d5d5"></div>
<div class="r" style="left:411px;top:167px;width:1px;height:20px;background:#e5e5e5"></div>
<div class="r" style="left:641px;top:167px;width:1px;height:20px;background:#e5e5e5"></div>
<div class="t " style="left:321.5px;top:172.0px;font-size:12px;line-height:12px;color:#000;font-weight:normal;letter-spacing:-0.12px;">Numéro item</div>
<div class="t " style="left:414px;top:172.0px;font-size:12px;line-height:12px;color:#000;font-weight:normal;letter-spacing:-0.12px;">Nom</div>
<div class="r" style="left:644px;top:167px;width:60px;height:20px;overflow:hidden"><div class="t" style="left:0.5px;top:5px;font-size:12px;line-height:12px;letter-spacing:-0.3px">Responsabilité</div></div>
<div class="r" style="left:316px;top:188px;width:388px;height:315px;overflow:hidden">
<div class="r" style="left:1px;top:0px;width:387px;height:18px;background:linear-gradient(180deg,#f2f2f2 0,#e8e8e8 50%,#dcdcdc 100%)"></div>
<div class="t " style="left:7px;top:3.5px;font-size:12px;line-height:12px;color:#000;font-weight:normal;letter-spacing:-0.35px;">0101.001</div>
<div class="t " style="left:100px;top:3.5px;font-size:12px;line-height:12px;color:#000;font-weight:normal;letter-spacing:-0.12px;">Table de travail</div>
<div class="t " style="left:330px;top:3.5px;font-size:12px;line-height:12px;color:#000;font-weight:normal;letter-spacing:-0.12px;">ARCH</div>
<div class="t " style="left:7px;top:22.5px;font-size:12px;line-height:12px;color:#000;font-weight:normal;letter-spacing:-0.35px;">0101.001:1</div>
<div class="t " style="left:100px;top:22.5px;font-size:12px;line-height:12px;color:#000;font-weight:normal;letter-spacing:-0.12px;">Table de travail</div>
<div class="t " style="left:330px;top:22.5px;font-size:12px;line-height:12px;color:#000;font-weight:normal;letter-spacing:-0.12px;">ARCH</div>
<div class="t " style="left:7px;top:41.5px;font-size:12px;line-height:12px;color:#000;font-weight:normal;letter-spacing:-0.35px;">0101.002</div>
<div class="t " style="left:100px;top:41.5px;font-size:12px;line-height:12px;color:#000;font-weight:normal;letter-spacing:-0.12px;">Siège de travail</div>
<div class="t " style="left:330px;top:41.5px;font-size:12px;line-height:12px;color:#000;font-weight:normal;letter-spacing:-0.12px;">ARCH</div>
<div class="t " style="left:7px;top:60.5px;font-size:12px;line-height:12px;color:#000;font-weight:normal;letter-spacing:-0.35px;">0101.003</div>
<div class="t " style="left:100px;top:60.5px;font-size:12px;line-height:12px;color:#000;font-weight:normal;letter-spacing:-0.12px;">Chaise de bureau avec accoudoirs, erg...</div>
<div class="t " style="left:7px;top:79.5px;font-size:12px;line-height:12px;color:#000;font-weight:normal;letter-spacing:-0.35px;">0101.004</div>
<div class="t " style="left:100px;top:79.5px;font-size:12px;line-height:12px;color:#000;font-weight:normal;letter-spacing:-0.12px;">Canapé 3 places</div>
<div class="t " style="left:330px;top:79.5px;font-size:12px;line-height:12px;color:#000;font-weight:normal;letter-spacing:-0.12px;">ARCH</div>
<div class="t " style="left:7px;top:98.5px;font-size:12px;line-height:12px;color:#000;font-weight:normal;letter-spacing:-0.35px;">0101.005</div>
<div class="t " style="left:100px;top:98.5px;font-size:12px;line-height:12px;color:#000;font-weight:normal;letter-spacing:-0.12px;">Fauteuil</div>
<div class="t " style="left:330px;top:98.5px;font-size:12px;line-height:12px;color:#000;font-weight:normal;letter-spacing:-0.12px;">MAN</div>
<div class="t " style="left:7px;top:117.5px;font-size:12px;line-height:12px;color:#000;font-weight:normal;letter-spacing:-0.35px;">0101.006</div>
<div class="t " style="left:100px;top:117.5px;font-size:12px;line-height:12px;color:#000;font-weight:normal;letter-spacing:-0.12px;">Chaise longue, réglable pour fauteuil in...</div>
<div class="t " style="left:330px;top:117.5px;font-size:12px;line-height:12px;color:#000;font-weight:normal;letter-spacing:-0.12px;">ARCH</div>
<div class="t " style="left:7px;top:136.5px;font-size:12px;line-height:12px;color:#000;font-weight:normal;letter-spacing:-0.35px;">0101.0078</div>
<div class="t " style="left:100px;top:136.5px;font-size:12px;line-height:12px;color:#000;font-weight:normal;letter-spacing:-0.12px;">Chaise de bureau</div>
<div class="t " style="left:330px;top:136.5px;font-size:12px;line-height:12px;color:#000;font-weight:normal;letter-spacing:-0.12px;">ARCH</div>
<div class="t " style="left:7px;top:155.5px;font-size:12px;line-height:12px;color:#000;font-weight:normal;letter-spacing:-0.35px;">0101.0079</div>
<div class="t " style="left:100px;top:155.5px;font-size:12px;line-height:12px;color:#000;font-weight:normal;letter-spacing:-0.12px;">Table à ajouter</div>
<div class="t " style="left:7px;top:174.5px;font-size:12px;line-height:12px;color:#000;font-weight:normal;letter-spacing:-0.35px;">0101.008</div>
<div class="t " style="left:100px;top:174.5px;font-size:12px;line-height:12px;color:#000;font-weight:normal;letter-spacing:-0.12px;">Canapé, salle d&#x27;attente</div>
<div class="t " style="left:330px;top:174.5px;font-size:12px;line-height:12px;color:#000;font-weight:normal;letter-spacing:-0.12px;">ARCH</div>
<div class="t " style="left:7px;top:193.5px;font-size:12px;line-height:12px;color:#000;font-weight:normal;letter-spacing:-0.35px;">0101.0080</div>
<div class="t " style="left:100px;top:193.5px;font-size:12px;line-height:12px;color:#000;font-weight:normal;letter-spacing:-0.12px;">test</div>
<div class="t " style="left:7px;top:212.5px;font-size:12px;line-height:12px;color:#000;font-weight:normal;letter-spacing:-0.35px;">0101.0081</div>
<div class="t " style="left:100px;top:212.5px;font-size:12px;line-height:12px;color:#000;font-weight:normal;letter-spacing:-0.12px;">Bas - 1 porte - 1 tiroir: 530 x 735 x 500...</div>
<div class="t " style="left:7px;top:231.5px;font-size:12px;line-height:12px;color:#000;font-weight:normal;letter-spacing:-0.35px;">0101.0082</div>
<div class="t " style="left:100px;top:231.5px;font-size:12px;line-height:12px;color:#000;font-weight:normal;letter-spacing:-0.12px;">Bas - 1 porte - 1 tiroir: 562 x 735 x 500...</div>
<div class="t " style="left:7px;top:250.5px;font-size:12px;line-height:12px;color:#000;font-weight:normal;letter-spacing:-0.35px;">0101.0083</div>
<div class="t " style="left:100px;top:250.5px;font-size:12px;line-height:12px;color:#000;font-weight:normal;letter-spacing:-0.12px;">Bas - 1 porte: 415 x 735 x 500 mm</div>
<div class="t " style="left:7px;top:269.5px;font-size:12px;line-height:12px;color:#000;font-weight:normal;letter-spacing:-0.35px;">0101.0084</div>
<div class="t " style="left:100px;top:269.5px;font-size:12px;line-height:12px;color:#000;font-weight:normal;letter-spacing:-0.12px;">Bas - 1 porte: 480 x 735 x 500 mm</div>
<div class="t " style="left:7px;top:288.5px;font-size:12px;line-height:12px;color:#000;font-weight:normal;letter-spacing:-0.35px;">0101.0085</div>
<div class="t " style="left:100px;top:288.5px;font-size:12px;line-height:12px;color:#000;font-weight:normal;letter-spacing:-0.12px;">Bas - 1 porte: 530 x 735 x 500 mm</div>
<div class="t " style="left:7px;top:307.5px;font-size:12px;line-height:12px;color:#000;font-weight:normal;letter-spacing:-0.35px;">0101.0086</div>
<div class="t " style="left:100px;top:307.5px;font-size:12px;line-height:12px;color:#000;font-weight:normal;letter-spacing:-0.12px;">Bas - 1 porte: 562 x 735 x 500 mm</div>
</div>
<div class="r" style="left:704px;top:167px;width:17px;height:336px;background:#f0f0f0"></div>
<div class="r" style="left:704px;top:184px;width:17px;height:57px;background:#cdcdcd"></div>
<div class="r" style="left:316px;top:503px;width:388px;height:17px;background:#f0f0f0"></div>
<div class="r" style="left:333px;top:503px;width:143px;height:17px;background:#cdcdcd"></div>
<div class="r" style="left:704px;top:503px;width:17px;height:17px;background:#f0f0f0"></div>
<div class="r" style="left:316px;top:520px;width:405px;height:20px;background:#f7f7f7"></div>
<div class="t " style="left:321px;top:525.5px;font-size:10px;line-height:10px;color:#000;font-weight:normal;">83 de 83</div>
<svg class="r" style="left:703px;top:522px;" width="16" height="16" viewBox="0 0 16 16"><rect x="1.5" y="3.5" width="4.5" height="11.5" fill="#fff" stroke="#8a8a8a" stroke-width="1"/><rect x="10" y="3.5" width="4.5" height="11.5" fill="#fff" stroke="#8a8a8a" stroke-width="1"/><rect x="6" y="1" width="4" height="12" fill="#ee5a24" stroke="#5a3020" stroke-width="0.5"/></svg>
<div class="r" style="left:315px;top:566px;width:407px;height:342px;background:#fff;border:1px solid #8c8c8c"></div>
<div class="r" style="left:470px;top:546px;width:251px;height:21px;border:1px solid #a0a0a0;border-bottom:none;background:linear-gradient(180deg,#f2f2f2,#e4e4e4)"></div>
<div class="r" style="left:476px;top:548px;width:222px;height:18px;overflow:hidden"><div class="t" style="left:0px;top:2px;font-size:12px;line-height:12px">Sous-items [0101.001 / TAB1: Table de travail]</div></div>
<div class="r" style="left:700px;top:548px;width:4px;height:16px;background:linear-gradient(90deg,rgba(235,235,235,0),#ebebeb)"></div>
<svg class="r" style="left:706px;top:551px;" width="10" height="9" viewBox="0 0 10 9"><path d="M1.2 1.2L8.8 7.8M8.8 1.2L1.2 7.8" stroke="#000" stroke-width="1.9"/></svg>
<div class="r" style="left:315px;top:543px;width:156px;height:24px;background:#fff;border:1px solid #8c8c8c;border-bottom:none"></div>
<div class="r" style="left:321px;top:546px;width:127px;height:18px;overflow:hidden"><div class="t" style="left:0px;top:4px;font-size:12px;line-height:12px">Occurrences [01-Mobilier]</div></div>
<div class="r" style="left:440px;top:548px;width:8px;height:16px;background:linear-gradient(90deg,rgba(255,255,255,0),#fff)"></div>
<svg class="r" style="left:455px;top:551.5px;" width="10" height="9" viewBox="0 0 10 9"><path d="M1.2 1.2L8.8 7.8M8.8 1.2L1.2 7.8" stroke="#000" stroke-width="1.9"/></svg>
<div class="r" style="left:318px;top:566px;width:386px;height:21px;background:linear-gradient(180deg,#ffffff 0,#f7f7f7 60%,#f0f0f0 100%);border-top:1px solid #ececec;border-bottom:1px solid #d5d5d5"></div>
<div class="r" style="left:353px;top:567px;width:1px;height:20px;background:#e5e5e5"></div>
<div class="r" style="left:429px;top:567px;width:1px;height:20px;background:#e5e5e5"></div>
<div class="r" style="left:525px;top:567px;width:1px;height:20px;background:#e5e5e5"></div>
<div class="r" style="left:686px;top:567px;width:1px;height:20px;background:#e5e5e5"></div>
<div class="t " style="left:324.5px;top:571.0px;font-size:12px;line-height:12px;color:#000;font-weight:normal;letter-spacing:-0.35px;">Ac...</div>
<div class="t " style="left:355.5px;top:571.0px;font-size:12px;line-height:12px;color:#000;font-weight:normal;letter-spacing:-0.12px;">#clé pièce</div>
<div class="t " style="left:432px;top:571.0px;font-size:12px;line-height:12px;color:#000;font-weight:normal;letter-spacing:-0.12px;">Numéro pièce</div>
<div class="t " style="left:528px;top:571.0px;font-size:12px;line-height:12px;color:#000;font-weight:normal;letter-spacing:-0.12px;">Nom pièce</div>
<div class="r" style="left:696px;top:567px;width:8px;height:20px;overflow:hidden"><div class="t" style="left:0px;top:4px;font-size:12px;line-height:12px">Q</div></div>
<div class="r" style="left:316px;top:587px;width:388px;height:282px;overflow:hidden">
<div class="t " style="left:42px;top:3.5px;font-size:12px;line-height:12px;color:#808080;font-weight:normal;letter-spacing:-0.35px;">01S.01.004</div>
<div class="t " style="left:118.5px;top:3.5px;font-size:12px;line-height:12px;color:#808080;font-weight:normal;letter-spacing:-0.35px;">1A04</div>
<div class="t " style="left:213px;top:3.5px;font-size:12px;line-height:12px;color:#808080;font-weight:normal;letter-spacing:-0.12px;">Bureau</div>
<div class="t " style="left:42px;top:22.5px;font-size:12px;line-height:12px;color:#808080;font-weight:normal;letter-spacing:-0.35px;">01S.01.005</div>
<div class="t " style="left:118.5px;top:22.5px;font-size:12px;line-height:12px;color:#808080;font-weight:normal;letter-spacing:-0.35px;">1A05</div>
<div class="t " style="left:213px;top:22.5px;font-size:12px;line-height:12px;color:#808080;font-weight:normal;letter-spacing:-0.12px;">Bureau</div>
<div class="t " style="left:42px;top:41.5px;font-size:12px;line-height:12px;color:#808080;font-weight:normal;letter-spacing:-0.35px;">01S.01.005</div>
<div class="t " style="left:118.5px;top:41.5px;font-size:12px;line-height:12px;color:#808080;font-weight:normal;letter-spacing:-0.35px;">1A05</div>
<div class="t " style="left:213px;top:41.5px;font-size:12px;line-height:12px;color:#808080;font-weight:normal;letter-spacing:-0.12px;">Bureau</div>
<div class="t " style="left:42px;top:60.5px;font-size:12px;line-height:12px;color:#808080;font-weight:normal;letter-spacing:-0.35px;">01S.01.005</div>
<div class="t " style="left:118.5px;top:60.5px;font-size:12px;line-height:12px;color:#808080;font-weight:normal;letter-spacing:-0.35px;">1A05</div>
<div class="t " style="left:213px;top:60.5px;font-size:12px;line-height:12px;color:#808080;font-weight:normal;letter-spacing:-0.12px;">Bureau</div>
<div class="t " style="left:42px;top:79.5px;font-size:12px;line-height:12px;color:#808080;font-weight:normal;letter-spacing:-0.35px;">01S.01.006</div>
<div class="t " style="left:118.5px;top:79.5px;font-size:12px;line-height:12px;color:#808080;font-weight:normal;letter-spacing:-0.35px;">1A06</div>
<div class="t " style="left:213px;top:79.5px;font-size:12px;line-height:12px;color:#808080;font-weight:normal;letter-spacing:-0.12px;">Bureau</div>
<div class="t " style="left:42px;top:98.5px;font-size:12px;line-height:12px;color:#808080;font-weight:normal;letter-spacing:-0.35px;">01S.01.007</div>
<div class="t " style="left:118.5px;top:98.5px;font-size:12px;line-height:12px;color:#808080;font-weight:normal;letter-spacing:-0.35px;">1A07</div>
<div class="t " style="left:213px;top:98.5px;font-size:12px;line-height:12px;color:#808080;font-weight:normal;letter-spacing:-0.12px;">Bureau</div>
<div class="t " style="left:42px;top:117.5px;font-size:12px;line-height:12px;color:#808080;font-weight:normal;letter-spacing:-0.35px;">02.002</div>
<div class="t " style="left:118.5px;top:117.5px;font-size:12px;line-height:12px;color:#808080;font-weight:normal;letter-spacing:-0.35px;">1D04</div>
<div class="t " style="left:213px;top:117.5px;font-size:12px;line-height:12px;color:#808080;font-weight:normal;letter-spacing:-0.12px;">Toilette</div>
<div class="t " style="left:42px;top:136.5px;font-size:12px;line-height:12px;color:#808080;font-weight:normal;letter-spacing:-0.35px;">02.012</div>
<div class="t " style="left:118.5px;top:136.5px;font-size:12px;line-height:12px;color:#808080;font-weight:normal;letter-spacing:-0.35px;">1D14</div>
<div class="t " style="left:213px;top:136.5px;font-size:12px;line-height:12px;color:#808080;font-weight:normal;letter-spacing:-0.12px;">Toilette</div>
<div class="t " style="left:42px;top:155.5px;font-size:12px;line-height:12px;color:#808080;font-weight:normal;letter-spacing:-0.35px;">02.015</div>
<div class="t " style="left:118.5px;top:155.5px;font-size:12px;line-height:12px;color:#808080;font-weight:normal;letter-spacing:-0.35px;">1D18</div>
<div class="t " style="left:213px;top:155.5px;font-size:12px;line-height:12px;color:#808080;font-weight:normal;letter-spacing:-0.12px;">Toilette</div>
<div class="t " style="left:42px;top:174.5px;font-size:12px;line-height:12px;color:#808080;font-weight:normal;letter-spacing:-0.35px;">03.004</div>
<div class="t " style="left:118.5px;top:174.5px;font-size:12px;line-height:12px;color:#808080;font-weight:normal;letter-spacing:-0.35px;">2F02</div>
<div class="t " style="left:213px;top:174.5px;font-size:12px;line-height:12px;color:#808080;font-weight:normal;letter-spacing:-0.12px;">Toilette</div>
<div class="t " style="left:42px;top:193.5px;font-size:12px;line-height:12px;color:#808080;font-weight:normal;letter-spacing:-0.35px;">03.006</div>
<div class="t " style="left:118.5px;top:193.5px;font-size:12px;line-height:12px;color:#808080;font-weight:normal;letter-spacing:-0.35px;">2F04</div>
<div class="t " style="left:213px;top:193.5px;font-size:12px;line-height:12px;color:#808080;font-weight:normal;letter-spacing:-0.12px;">Bureau Psychologue</div>
<div class="t " style="left:42px;top:212.5px;font-size:12px;line-height:12px;color:#808080;font-weight:normal;letter-spacing:-0.35px;">03.006</div>
<div class="t " style="left:118.5px;top:212.5px;font-size:12px;line-height:12px;color:#808080;font-weight:normal;letter-spacing:-0.35px;">2F04</div>
<div class="t " style="left:213px;top:212.5px;font-size:12px;line-height:12px;color:#808080;font-weight:normal;letter-spacing:-0.12px;">Bureau Psychologue</div>
<div class="t " style="left:42px;top:231.5px;font-size:12px;line-height:12px;color:#808080;font-weight:normal;letter-spacing:-0.35px;">03.007</div>
<div class="t " style="left:118.5px;top:231.5px;font-size:12px;line-height:12px;color:#808080;font-weight:normal;letter-spacing:-0.35px;">2F05</div>
<div class="t " style="left:213px;top:231.5px;font-size:12px;line-height:12px;color:#808080;font-weight:normal;letter-spacing:-0.12px;">Bureau Psychiatre</div>
<div class="t " style="left:42px;top:250.5px;font-size:12px;line-height:12px;color:#808080;font-weight:normal;letter-spacing:-0.35px;">03.008</div>
<div class="t " style="left:118.5px;top:250.5px;font-size:12px;line-height:12px;color:#808080;font-weight:normal;letter-spacing:-0.35px;">2F06</div>
<div class="t " style="left:213px;top:250.5px;font-size:12px;line-height:12px;color:#808080;font-weight:normal;letter-spacing:-0.12px;">Bureau Psychologue</div>
<div class="t " style="left:42px;top:269.5px;font-size:12px;line-height:12px;color:#808080;font-weight:normal;letter-spacing:-0.35px;">03.013</div>
<div class="t " style="left:118.5px;top:269.5px;font-size:12px;line-height:12px;color:#808080;font-weight:normal;letter-spacing:-0.35px;">2F13</div>
<div class="t " style="left:213px;top:269.5px;font-size:12px;line-height:12px;color:#808080;font-weight:normal;letter-spacing:-0.12px;">Toilette</div>
</div>
<div class="r" style="left:704px;top:567px;width:17px;height:302px;background:#f0f0f0"></div>
<div class="r" style="left:704px;top:584px;width:17px;height:37px;background:#cdcdcd"></div>
<div class="r" style="left:316px;top:869px;width:388px;height:17px;background:#f0f0f0"></div>
<div class="r" style="left:333px;top:869px;width:107px;height:17px;background:#cdcdcd"></div>
<div class="r" style="left:704px;top:869px;width:17px;height:17px;background:#f0f0f0"></div>
<div class="r" style="left:316px;top:886px;width:405px;height:21px;background:#f7f7f7"></div>
<div class="t " style="left:321.5px;top:891.5px;font-size:10px;line-height:10px;color:#ff0000;font-weight:normal;">100 de 141</div>
<div class="t " style="left:385px;top:891.5px;font-size:10px;line-height:10px;color:#000;font-weight:normal;">Afficher tous</div>
<svg class="r" style="left:703px;top:888px;" width="16" height="16" viewBox="0 0 16 16"><rect x="1.5" y="3.5" width="4.5" height="11.5" fill="#fff" stroke="#8a8a8a" stroke-width="1"/><rect x="10" y="3.5" width="4.5" height="11.5" fill="#fff" stroke="#8a8a8a" stroke-width="1"/><rect x="6" y="1" width="4" height="12" fill="#ee5a24" stroke="#5a3020" stroke-width="0.5"/></svg>
<div class="r" style="left:726px;top:145px;width:490px;height:381px;background:#f4f4f4;border:1px solid #8c8c8c"></div>
<div class="r" style="left:727px;top:146px;width:488px;height:21px;background:#f0f0f0;border-bottom:1px solid #a0a0a0"></div>
<div class="t " style="left:730.5px;top:150.5px;font-size:12px;line-height:12px;color:#000;font-weight:normal;letter-spacing:-0.12px;">Propriétés</div>
<svg class="r" style="left:1181px;top:151px;" width="10" height="13" viewBox="0 0 10 13"><path d="M2 8.2V3.2Q2 1 4.6 1Q7.2 1 7.2 3.2V8.2Z" fill="#000"/><path d="M3.7 7.8V3.2Q3.7 2.4 4.7 2.4Q5.4 2.4 5.1 3.2L4.7 7.8Z" fill="#f0f0f0"/><rect x="0.8" y="7.6" width="7.6" height="1.5" fill="#000"/><rect x="3.9" y="8.5" width="1.4" height="3.8" fill="#000"/></svg>
<svg class="r" style="left:1200px;top:152px;" width="10" height="9" viewBox="0 0 10 9"><path d="M1.2 1.2L8.8 7.8M8.8 1.2L1.2 7.8" stroke="#000" stroke-width="1.9"/></svg>
<svg class="r" style="left:746px;top:176px;" width="34" height="34" viewBox="0 0 34 34"><rect x="9" y="1" width="16" height="14" fill="#d9662f" stroke="#333" stroke-width="1"/><path d="M17 15V20M5 24V20H29V24M17 20V24" fill="none" stroke="#333" stroke-width="1.1"/><rect x="1.5" y="24.5" width="7" height="7.5" fill="#fff" stroke="#333" stroke-width="1.1"/><rect x="13" y="24.5" width="7" height="7.5" fill="#fff" stroke="#333" stroke-width="1.1"/><rect x="24.5" y="24.5" width="7.5" height="7.5" fill="#fff" stroke="#333" stroke-width="1.1"/></svg>
<div class="t " style="left:794.5px;top:178.5px;font-size:16px;line-height:16px;color:#000;font-weight:bold;">Sous-catégorie: 01-Mobilier</div>
<div class="r" style="left:733px;top:224px;width:476px;height:121px;border:1px solid #d5e1ea;border-radius:4px"></div>
<div class="r" style="left:739px;top:216px;width:100px;height:12px;background:#f4f4f4"></div>
<div class="t " style="left:741px;top:218.0px;font-size:12px;line-height:12px;color:#23a0dc;font-weight:bold;letter-spacing:-0.12px;">Groupes d&#x27;items</div>
<div class="t " style="left:743px;top:240.5px;font-size:12px;line-height:12px;color:#000;font-weight:normal;letter-spacing:-0.12px;">Numéro</div>
<div class="r" style="left:896px;top:237px;width:302px;height:23px;background:#fff;border:1px solid #ababab"></div>
<div class="t " style="left:900px;top:241.0px;font-size:12px;line-height:12px;color:#000;font-weight:normal;letter-spacing:-0.35px;">01</div>
<div class="t " style="left:743px;top:265.5px;font-size:12px;line-height:12px;color:#000;font-weight:normal;letter-spacing:-0.12px;">Nom</div>
<div class="r" style="left:896px;top:262px;width:302px;height:23px;background:#fff;border:1px solid #ababab"></div>
<div class="t " style="left:899px;top:266.0px;font-size:12px;line-height:12px;color:#000;font-weight:normal;letter-spacing:-0.12px;">Mobilier</div>
<div class="t " style="left:743px;top:291.0px;font-size:12px;line-height:12px;color:#000;font-weight:normal;letter-spacing:-0.12px;">Vue</div>
<div class="r" style="left:896px;top:287px;width:302px;height:23px;background:#e5f1fb;border:1px solid #6fa8dc"></div>
<div class="t " style="left:902px;top:292.5px;font-size:12px;line-height:12px;color:#000;font-weight:normal;letter-spacing:-0.12px;">Items</div>
<svg class="r" style="left:1184px;top:295px;" width="9" height="6" viewBox="0 0 9 6"><path d="M1.6 1.2L4.5 4.2L7.4 1.2" fill="none" stroke="#000" stroke-width="1.3"/></svg>
<div class="t " style="left:743px;top:316.0px;font-size:12px;line-height:12px;color:#000;font-weight:normal;letter-spacing:-0.12px;">Catégories d&#x27;items associés</div>
<div class="r" style="left:733px;top:357px;width:476px;height:46px;border:1px solid #d5e1ea;border-radius:4px"></div>
<div class="r" style="left:739px;top:350px;width:90px;height:12px;background:#f4f4f4"></div>
<div class="t " style="left:741px;top:351.0px;font-size:12px;line-height:12px;color:#23a0dc;font-weight:bold;letter-spacing:-0.12px;">Catégorisation</div>
<div class="t " style="left:743px;top:373.5px;font-size:12px;line-height:12px;color:#000;font-weight:normal;letter-spacing:-0.12px;">Nombre Equipement</div>
<div class="r" style="left:896px;top:369px;width:248px;height:23px;background:#fff;border:1px solid #ababab"></div>
<div class="r" style="left:1146px;top:368px;width:25px;height:25px;background:#dcdcdc;border:1px solid #686868;box-shadow:inset 0 0 0 1px #e6e6e6"></div>
<div class="r" style="left:1173px;top:368px;width:25px;height:25px;background:#f0f0f0;border:1px solid #b0b0b0"></div>
<div class="r" style="left:733px;top:415px;width:476px;height:71px;border:1px solid #d5e1ea;border-radius:4px"></div>
<div class="r" style="left:739px;top:408px;width:86px;height:12px;background:#f4f4f4"></div>
<div class="t " style="left:741px;top:408.5px;font-size:12px;line-height:12px;color:#23a0dc;font-weight:bold;letter-spacing:-0.12px;">Classification</div>
<div class="t " style="left:743px;top:432.0px;font-size:12px;line-height:12px;color:#000;font-weight:normal;letter-spacing:-0.12px;">OmniClass 23[2010-06-24]</div>
<div class="t " style="left:743px;top:456.5px;font-size:12px;line-height:12px;color:#000;font-weight:normal;letter-spacing:-0.12px;">classification 1</div>
<div class="r" style="left:896px;top:428px;width:248px;height:23px;background:#fff;border:1px solid #ababab"></div>
<div class="r" style="left:896px;top:453px;width:248px;height:23px;background:#fff;border:1px solid #ababab"></div>
<div class="r" style="left:1146px;top:427px;width:25px;height:26px;background:#dcdcdc;border:1px solid #686868;box-shadow:inset 0 0 0 1px #e6e6e6"></div>
<svg class="r" style="left:1151px;top:437px;" width="15" height="5" viewBox="0 0 15 5"><path d="M1.5 1V3.6H4V1M6.3 1V3.6H8.8V1M11.1 1V3.6H13.6V1" fill="none" stroke="#222" stroke-width="1"/></svg>
<div class="r" style="left:1146px;top:452px;width:25px;height:26px;background:#dcdcdc;border:1px solid #686868;box-shadow:inset 0 0 0 1px #e6e6e6"></div>
<svg class="r" style="left:1151px;top:462px;" width="15" height="5" viewBox="0 0 15 5"><path d="M1.5 1V3.6H4V1M6.3 1V3.6H8.8V1M11.1 1V3.6H13.6V1" fill="none" stroke="#222" stroke-width="1"/></svg>
<div class="r" style="left:1173px;top:427px;width:25px;height:25px;background:#f0f0f0;border:1px solid #b0b0b0"></div>
<svg class="r" style="left:1178px;top:432px;" width="15" height="15" viewBox="0 0 15 15"><path d="M3 1L7.5 5.5L12 1L14 3L9.5 7.5L14 12L12 14L7.5 9.5L3 14L1 12L5.5 7.5L1 3Z" fill="#fff" stroke="#222" stroke-width="1"/></svg>
<div class="r" style="left:1173px;top:452px;width:25px;height:25px;background:#f0f0f0;border:1px solid #b0b0b0"></div>
<svg class="r" style="left:1178px;top:457px;" width="15" height="15" viewBox="0 0 15 15"><path d="M3 1L7.5 5.5L12 1L14 3L9.5 7.5L14 12L12 14L7.5 9.5L3 14L1 12L5.5 7.5L1 3Z" fill="#fff" stroke="#222" stroke-width="1"/></svg>
<div class="r" style="left:1036px;top:495px;width:79px;height:20px;background:#f0f0f0;border:1px solid #bcbcbc"></div>
<div class="t" style="left:975.0px;width:200px;text-align:center;top:499.5px;font-size:12px;line-height:12px;color:#a0a0a0;font-weight:normal;letter-spacing:-0.12px;">Annuler</div>
<div class="r" style="left:1125px;top:495px;width:80px;height:20px;background:#f0f0f0;border:1px solid #bcbcbc"></div>
<div class="t" style="left:1065.0px;width:200px;text-align:center;top:499.5px;font-size:12px;line-height:12px;color:#a0a0a0;font-weight:normal;letter-spacing:-0.12px;">Sauvegarder</div>
<div class="r" style="left:896px;top:310px;width:302px;height:82px;background:#fff;border:1px solid #828790;box-shadow:3px 3px 4px rgba(0,0,0,0.35)"></div>
<div class="t " style="left:902px;top:335.5px;font-size:12px;line-height:12px;color:#000;font-weight:normal;letter-spacing:-0.12px;">Finitions</div>
<div class="r" style="left:897px;top:351px;width:300px;height:20px;background:#cce8f7;border:1px solid #26a0da"></div>
<div class="t " style="left:902px;top:355.5px;font-size:12px;line-height:12px;color:#000;font-weight:normal;letter-spacing:-0.12px;">Items</div>
<div class="t " style="left:902px;top:375.5px;font-size:12px;line-height:12px;color:#000;font-weight:normal;letter-spacing:-0.12px;">Porte</div>
<div class="r" style="left:742px;top:284px;width:470px;height:134px;border:3px solid #ee3e44;box-shadow:2px 2px 4px rgba(0,0,0,0.3), inset 1px 1px 3px rgba(0,0,0,0.25)"></div>
<div class="r" style="left:726px;top:530px;width:490px;height:377px;background:#fff;border:1px solid #8c8c8c"></div>
<div class="r" style="left:727px;top:531px;width:488px;height:21px;background:#f0f0f0;border-bottom:1px solid #a0a0a0"></div>
<div class="t " style="left:730.5px;top:535.5px;font-size:12px;line-height:12px;color:#000;font-weight:normal;letter-spacing:-0.12px;">Documents [0101.001 / TAB1: Table de travail]</div>
<svg class="r" style="left:1181px;top:536px;" width="10" height="13" viewBox="0 0 10 13"><path d="M2 8.2V3.2Q2 1 4.6 1Q7.2 1 7.2 3.2V8.2Z" fill="#000"/><path d="M3.7 7.8V3.2Q3.7 2.4 4.7 2.4Q5.4 2.4 5.1 3.2L4.7 7.8Z" fill="#f0f0f0"/><rect x="0.8" y="7.6" width="7.6" height="1.5" fill="#000"/><rect x="3.9" y="8.5" width="1.4" height="3.8" fill="#000"/></svg>
<svg class="r" style="left:1200px;top:537px;" width="10" height="9" viewBox="0 0 10 9"><path d="M1.2 1.2L8.8 7.8M8.8 1.2L1.2 7.8" stroke="#000" stroke-width="1.9"/></svg>
<div class="t" style="left:821.0px;width:300px;text-align:center;top:724.0px;font-size:13px;line-height:13px;color:#000;font-weight:normal;">Aucune entité n&#x27;est sélectionnée</div>
<div class="r" style="left:1221px;top:139px;width:1px;height:772px;background:#8a8a8a"></div>
<div class="r" style="left:1222px;top:140px;width:54px;height:771px;background:#f3f3f3"></div>
<svg class="r" style="left:1222px;top:140px;" width="55" height="30" viewBox="0 0 55 30"><rect x="8.7" y="6.8" width="23" height="16.5" rx="1.2" fill="#fff" stroke="#505050" stroke-width="1.1"/><path d="M8.7 12H31.7" stroke="#8a8a8a" stroke-width="1.5"/><path d="M15.7 17.5H31.7M15.7 12V23.3" stroke="#505050" stroke-width="1"/><path d="M45 14H50.2L47.6 17Z" fill="#000"/></svg>
<div class="r" style="left:1222px;top:173px;width:54px;height:34px;background:#d9d9d9"></div>
<div class="r" style="left:1273px;top:173px;width:3px;height:34px;background:#e8602c"></div>
<div class="r" style="left:1222px;top:241px;width:54px;height:34px;background:#d9d9d9"></div>
<div class="r" style="left:1273px;top:241px;width:3px;height:34px;background:#e8602c"></div>
<div class="r" style="left:1222px;top:309px;width:54px;height:34px;background:#d9d9d9"></div>
<div class="r" style="left:1273px;top:309px;width:3px;height:34px;background:#e8602c"></div>
<div class="r" style="left:1222px;top:377px;width:54px;height:34px;background:#d9d9d9"></div>
<div class="r" style="left:1273px;top:377px;width:3px;height:34px;background:#e8602c"></div>
<svg class="r" style="left:0;top:0" width="1277" height="912" viewBox="0 0 1277 912"><circle cx="1248" cy="190" r="12.3" fill="none" stroke="#222" stroke-width="1.1"/><circle cx="1248" cy="182.3" r="1.6" fill="#111"/><path d="M1245.3 186.2H1249.3V195.8H1251V197.2H1245V195.8H1246.8V187.6H1245.3Z" fill="#111"/><path d="M1256.7 213L1262.5 224.5Q1260 227.5 1253 226Z" fill="#fff" stroke="#333" stroke-width="1"/><circle cx="1249.8" cy="229" r="7.3" fill="#fff" stroke="#333" stroke-width="1"/><path d="M1238 212.5H1246.5L1250.5 216.5V228H1238Z" fill="#fff" stroke="#333" stroke-width="1"/><path d="M1240 219H1248.5M1240 221.5H1248.5M1240 224H1248.5" stroke="#777" stroke-width="1.2"/><path d="M1246.75 246L1253.5 249.51V255.49L1246.75 259L1240 255.49V249.51Z" fill="#9b9b9b" stroke="#333" stroke-width="1" stroke-linejoin="round"/><path d="M1240 249.51L1246.75 253.02L1253.5 249.51M1246.75 253.02V259" fill="none" stroke="#e0e0e0" stroke-width="1"/><path d="M1239.75 257.5L1244.0 259.93V264.07L1239.75 266.5L1235.5 264.07V259.93Z" fill="#fff" stroke="#333" stroke-width="0.9" stroke-linejoin="round"/><path d="M1235.5 259.93L1239.75 262.36L1244.0 259.93M1239.75 262.36V266.5" fill="none" stroke="#333" stroke-width="0.9"/><path d="M1252.75 259L1258.0 261.835V266.665L1252.75 269.5L1247.5 266.665V261.835Z" fill="#fff" stroke="#333" stroke-width="0.9" stroke-linejoin="round"/><path d="M1247.5 261.835L1252.75 264.67L1258.0 261.835M1252.75 264.67V269.5" fill="none" stroke="#333" stroke-width="0.9"/><path d="M1249.5 280L1261 286V298L1249.5 304L1238 298V286Z" fill="none" stroke="#333" stroke-width="1.1" stroke-dasharray="4 3"/><path d="M1249.5 280V289" stroke="#333" stroke-width="1"/><path d="M1249.75 289L1255.5 292.105V297.395L1249.75 300.5L1244 297.395V292.105Z" fill="#fff" stroke="#333" stroke-width="1" stroke-linejoin="round"/><path d="M1244 292.105L1249.75 295.21L1255.5 292.105M1249.75 295.21V300.5" fill="none" stroke="#333" stroke-width="1"/><path d="M1246.5 314L1257.8 319.5V332.8L1246.5 338.3L1235.3 332.8V319.5Z" fill="none" stroke="#444" stroke-width="1"/><path d="M1235.3 319.5L1246.5 325L1257.8 319.5M1246.5 325V338.3" fill="none" stroke="#444" stroke-width="0.9"/><path d="M1246.5 317L1252 331Q1249 334.5 1241 332.5Z" fill="#8c8c8c" stroke="#333" stroke-width="0.9"/><path d="M1246.5 317V337" stroke="#333" stroke-width="0.9"/><path d="M1249.5 348L1262 352.5V366.5L1249.5 371.5L1237 366.5V352.5Z" fill="#fff" stroke="#333" stroke-width="1.1" stroke-linejoin="round"/><path d="M1237 352.5L1249.5 357.3L1262 352.5M1249.5 357.3V371.5M1243 350.2L1255.5 355" fill="none" stroke="#333" stroke-width="1"/><path d="M1240 357L1246.5 359.5V365L1240 362.5Z" fill="#b5b5b5" stroke="#333" stroke-width="0.9"/><path d="M1235.5 382.5H1248.5L1255 389V406.5H1235.5Z" fill="#fff" stroke="#222" stroke-width="1.1"/><path d="M1248.5 382.5V389H1255" fill="none" stroke="#222" stroke-width="0.9"/><path d="M1246.5 386V395Q1246.5 398.8 1242.5 398.8Q1238.5 398.8 1238.5 395V385.5Q1238.5 382.2 1241.7 382.2Q1244.8 382.2 1244.8 385.5V394Q1244.8 396.3 1242.6 396.3Q1240.5 396.3 1240.5 394V386" fill="none" stroke="#222" stroke-width="1"/><path d="M1237.5 420.5H1244L1246 416.5H1256L1258 420.5H1262V433.5H1237.5Z" fill="#fff" stroke="#222" stroke-width="1.1" stroke-linejoin="round"/><circle cx="1252" cy="426.5" r="5.6" fill="#fff" stroke="#222" stroke-width="1.1"/><circle cx="1252" cy="426.5" r="3" fill="none" stroke="#222" stroke-width="1"/><circle cx="1241.5" cy="423.5" r="1.3" fill="none" stroke="#222" stroke-width="0.9"/><path d="M1238.5 419.5H1242" stroke="#222" stroke-width="1"/><circle cx="1255.4" cy="454" r="4.5" fill="#fff" stroke="#333" stroke-width="1"/><path d="M1245 460L1253 456" stroke="#777" stroke-width="3.5"/><path d="M1242.0 454L1247 457.375V463.125L1242.0 466.5L1237 463.125V457.375Z" fill="#fff" stroke="#333" stroke-width="1" stroke-linejoin="round"/><path d="M1237 457.375L1242.0 460.75L1247 457.375M1242.0 460.75V466.5" fill="none" stroke="#333" stroke-width="1"/><rect x="1247.5" y="457.6" width="14.5" height="13.8" fill="#fff" stroke="#222" stroke-width="1.1"/><rect x="1249.5" y="459.5" width="5" height="3" fill="#111"/><rect x="1255" y="463" width="5.5" height="2.8" fill="#111"/><rect x="1255" y="467" width="5.5" height="2.8" fill="#111"/><path d="M1252 462.5V468.5H1255M1252 464.5H1255" fill="none" stroke="#111" stroke-width="0.9"/><circle cx="1255.4" cy="488" r="4.5" fill="#fff" stroke="#333" stroke-width="1"/><path d="M1245 494L1253 490" stroke="#777" stroke-width="3.5"/><path d="M1242.0 488L1247 491.375V497.125L1242.0 500.5L1237 497.125V491.375Z" fill="#fff" stroke="#333" stroke-width="1" stroke-linejoin="round"/><path d="M1237 491.375L1242.0 494.75L1247 491.375M1242.0 494.75V500.5" fill="none" stroke="#333" stroke-width="1"/><rect x="1247.5" y="491.6" width="14.5" height="13.8" fill="#fff" stroke="#222" stroke-width="1.1"/><rect x="1249.5" y="494" width="3.5" height="3.5" fill="#111"/><rect x="1249.5" y="499.5" width="3.5" height="3.5" fill="#111"/><rect x="1256.5" y="499.5" width="3.5" height="3.5" fill="#111"/><path d="M1251.5 501L1259 494.5M1251 496L1258 501" stroke="#111" stroke-width="1.2"/><path d="M1245 527L1253 523M1245 532L1252 534" stroke="#888" stroke-width="3.5"/><circle cx="1255" cy="521.3" r="4.6" fill="#fff" stroke="#333" stroke-width="1"/><circle cx="1255.9" cy="533.6" r="5.7" fill="#fff" stroke="#333" stroke-width="1"/><path d="M1242.0 522L1247 525.375V531.125L1242.0 534.5L1237 531.125V525.375Z" fill="#fff" stroke="#333" stroke-width="1" stroke-linejoin="round"/><path d="M1237 525.375L1242.0 528.75L1247 525.375M1242.0 528.75V534.5" fill="none" stroke="#333" stroke-width="1"/><path d="M1252.0 552L1260 555.915V562.585L1252.0 566.5L1244 562.585V555.915Z" fill="#9a9a9a" stroke="#333" stroke-width="1" stroke-linejoin="round"/><path d="M1244 555.915L1252.0 559.83L1260 555.915M1252.0 559.83V566.5" fill="none" stroke="#dcdcdc" stroke-width="1"/><path d="M1244.0 565L1249 567.835V572.665L1244.0 575.5L1239 572.665V567.835Z" fill="#fff" stroke="#333" stroke-width="0.9" stroke-linejoin="round"/><path d="M1239 567.835L1244.0 570.67L1249 567.835M1244.0 570.67V575.5" fill="none" stroke="#333" stroke-width="0.9"/><path d="M1238.5 586.5H1250.5L1256.5 592.5V609.5H1238.5Z" fill="#fff" stroke="#222" stroke-width="1.1"/><path d="M1250.5 586.5V592.5H1256.5" fill="none" stroke="#222" stroke-width="0.9"/><circle cx="1247" cy="600.3" r="5.5" fill="none" stroke="#222" stroke-width="1"/><path d="M1246.8 596.8V600.6H1250" fill="none" stroke="#222" stroke-width="1"/></svg>
<svg class="r" style="left:0;top:0" width="1277" height="912" viewBox="0 0 1277 912"><path d="M709.2 178.5L712.5 175.0L715.8 178.5" fill="none" stroke="#8a8a8a" stroke-width="1.3"/><path d="M709.2 492.5L712.5 496.0L715.8 492.5" fill="none" stroke="#8a8a8a" stroke-width="1.3"/><path d="M326.5 508.2L323.0 511.5L326.5 514.8" fill="none" stroke="#8a8a8a" stroke-width="1.3"/><path d="M693.5 508.2L697.0 511.5L693.5 514.8" fill="none" stroke="#8a8a8a" stroke-width="1.3"/><path d="M709.2 578.5L712.5 575.0L715.8 578.5" fill="none" stroke="#8a8a8a" stroke-width="1.3"/><path d="M709.2 858.5L712.5 862.0L715.8 858.5" fill="none" stroke="#8a8a8a" stroke-width="1.3"/><path d="M326.5 874.2L323.0 877.5L326.5 880.8" fill="none" stroke="#8a8a8a" stroke-width="1.3"/><path d="M693.5 874.2L697.0 877.5L693.5 880.8" fill="none" stroke="#8a8a8a" stroke-width="1.3"/></svg>
<div class="r" style="left:704px;top:503px;width:17px;height:1px;background:#fff"></div>
<div class="r" style="left:704px;top:503px;width:1px;height:17px;background:#fff"></div>
<div class="r" style="left:704px;top:869px;width:17px;height:1px;background:#fff"></div>
<div class="r" style="left:704px;top:869px;width:1px;height:17px;background:#fff"></div>
<div class="r" style="left:0px;top:0px;width:1px;height:912px;background:#000"></div>
<div class="r" style="left:1276px;top:0px;width:1px;height:912px;background:#000"></div>
<div class="r" style="left:0px;top:910px;width:1277px;height:2px;background:#000"></div>
</body></html>
